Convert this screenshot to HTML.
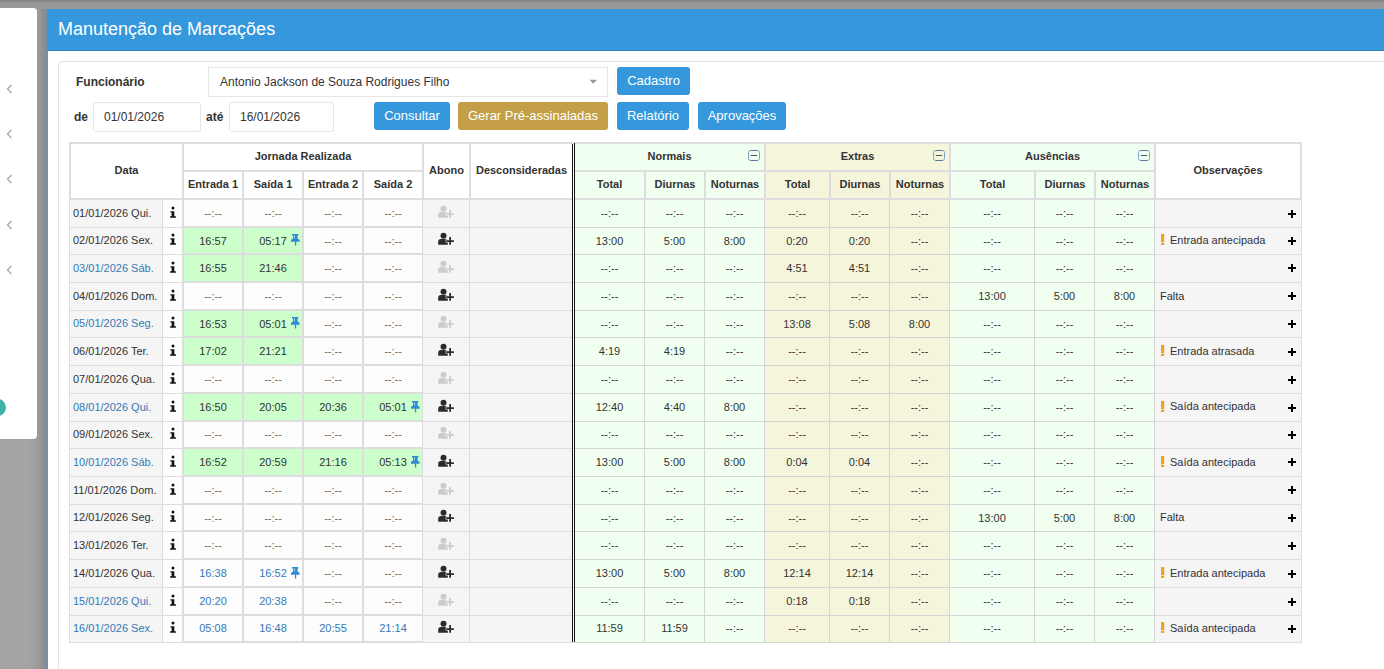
<!DOCTYPE html><html><head><meta charset="utf-8"><style>
html,body{margin:0;padding:0;}
body{width:1384px;height:669px;overflow:hidden;position:relative;background:#a4a4a4;font-family:"Liberation Sans",sans-serif;}
.r{position:absolute;display:block;}
.t{position:absolute;white-space:nowrap;box-sizing:border-box;font-family:"Liberation Sans",sans-serif;}
</style></head><body>
<div class="r" style="left:0px;top:0px;width:1384px;height:2px;background:#868686;"></div>
<div class="r" style="left:0px;top:2px;width:1384px;height:7px;background:#989898;"></div>
<div class="r" style="left:28px;top:9px;width:18px;height:660px;background:linear-gradient(to right,rgba(0,0,0,0) 0%,rgba(0,0,0,0.045) 50%,rgba(0,0,0,0.16) 100%);"></div>
<div class="r" style="left:0px;top:8px;width:37px;height:431px;background:#fff;border-radius:0 4px 4px 0;overflow:hidden;"><div class="r" style="left:-11px;top:391px;width:17px;height:17px;border-radius:50%;background:#3bb4a6;"></div></div>
<svg class="r" style="left:6px;top:84px" width="8" height="10" viewBox="0 0 8 10"><path d="M5.5 1 L1.5 5 L5.5 9" fill="none" stroke="#a3abb8" stroke-width="1.4"/></svg>
<svg class="r" style="left:6px;top:129px" width="8" height="10" viewBox="0 0 8 10"><path d="M5.5 1 L1.5 5 L5.5 9" fill="none" stroke="#a3abb8" stroke-width="1.4"/></svg>
<svg class="r" style="left:6px;top:174px" width="8" height="10" viewBox="0 0 8 10"><path d="M5.5 1 L1.5 5 L5.5 9" fill="none" stroke="#a3abb8" stroke-width="1.4"/></svg>
<svg class="r" style="left:6px;top:220px" width="8" height="10" viewBox="0 0 8 10"><path d="M5.5 1 L1.5 5 L5.5 9" fill="none" stroke="#a3abb8" stroke-width="1.4"/></svg>
<svg class="r" style="left:6px;top:265px" width="8" height="10" viewBox="0 0 8 10"><path d="M5.5 1 L1.5 5 L5.5 9" fill="none" stroke="#a3abb8" stroke-width="1.4"/></svg>
<div class="r" style="left:46px;top:9px;width:2px;height:660px;background:#7191ae;"></div>
<div class="r" style="left:48px;top:51px;width:1336px;height:618px;background:#ffffff;"></div>
<div class="r" style="left:47px;top:9px;width:1337px;height:42px;background:#3598dc;"></div>
<div class="r" style="left:47px;top:50px;width:1337px;height:1px;background:#3081bf;"></div>
<div class="t" style="left:58px;top:8px;width:543px;height:42px;line-height:42px;text-align:left;color:#ffffff;font-size:18px;padding-left:0px;line-height:42px;">Manutenção de Marcações</div>
<div class="r" style="left:58px;top:61px;width:1400px;height:700px;border:1px solid #e3e3e3;border-radius:4px;box-sizing:border-box;"></div>
<div class="t" style="left:76px;top:67px;width:125px;height:30px;line-height:30px;text-align:left;color:#333333;font-size:12px;font-weight:bold;padding-left:0px;">Funcionário</div>
<div class="r" style="left:208px;top:67px;width:400px;height:30px;border:1px solid #e5e5e5;box-sizing:border-box;background:#fff;"></div>
<div class="t" style="left:220px;top:67px;width:381px;height:30px;line-height:30px;text-align:left;color:#333333;font-size:12px;padding-left:0px;">Antonio Jackson de Souza Rodrigues Filho</div>
<svg class="r" style="left:589px;top:79px" width="9" height="6" viewBox="0 0 9 6"><path d="M0.5 0.8 H8 L4.25 4.8 Z" fill="#999"/></svg>
<div class="t" style="left:617px;top:67px;width:73px;height:28px;line-height:28px;background:#3598dc;border-radius:3px;color:#fff;font-size:13px;text-align:center;">Cadastro</div>
<div class="t" style="left:74px;top:102px;width:19px;height:30px;line-height:30px;text-align:left;color:#333333;font-size:12px;font-weight:bold;padding-left:0px;">de</div>
<div class="r" style="left:93px;top:102px;width:108px;height:30px;border:1px solid #e5e5e5;border-radius:3px;box-sizing:border-box;background:#fff;"></div>
<div class="t" style="left:104px;top:102px;width:97px;height:30px;line-height:30px;text-align:left;color:#333333;font-size:12px;padding-left:0px;">01/01/2026</div>
<div class="t" style="left:206px;top:102px;width:23px;height:30px;line-height:30px;text-align:left;color:#333333;font-size:12px;font-weight:bold;padding-left:0px;">até</div>
<div class="r" style="left:229px;top:102px;width:105px;height:30px;border:1px solid #e5e5e5;border-radius:3px;box-sizing:border-box;background:#fff;"></div>
<div class="t" style="left:240px;top:102px;width:94px;height:30px;line-height:30px;text-align:left;color:#333333;font-size:12px;padding-left:0px;">16/01/2026</div>
<div class="t" style="left:374px;top:102px;width:76px;height:28px;line-height:28px;background:#3598dc;border-radius:3px;color:#fff;font-size:13px;text-align:center;">Consultar</div>
<div class="t" style="left:458px;top:102px;width:150px;height:28px;line-height:28px;background:#c49f47;border-radius:3px;color:#fff;font-size:13px;text-align:center;">Gerar Pré-assinaladas</div>
<div class="t" style="left:617px;top:102px;width:72px;height:28px;line-height:28px;background:#3598dc;border-radius:3px;color:#fff;font-size:13px;text-align:center;">Relatório</div>
<div class="t" style="left:698px;top:102px;width:88px;height:28px;line-height:28px;background:#3598dc;border-radius:3px;color:#fff;font-size:13px;text-align:center;">Aprovações</div>
<div class="r" style="left:69px;top:142px;width:1233px;height:501px;background:#dddddd;"></div>
<div class="r" style="left:71px;top:144px;width:111px;height:54px;background:#ffffff;"></div>
<div class="r" style="left:184px;top:144px;width:238px;height:26px;background:#ffffff;"></div>
<div class="r" style="left:184px;top:172px;width:58px;height:26px;background:#ffffff;"></div>
<div class="r" style="left:244px;top:172px;width:58px;height:26px;background:#ffffff;"></div>
<div class="r" style="left:304px;top:172px;width:58px;height:26px;background:#ffffff;"></div>
<div class="r" style="left:364px;top:172px;width:58px;height:26px;background:#ffffff;"></div>
<div class="r" style="left:424px;top:144px;width:45px;height:54px;background:#ffffff;"></div>
<div class="r" style="left:471px;top:144px;width:101px;height:54px;background:#ffffff;"></div>
<div class="r" style="left:575px;top:144px;width:189px;height:26px;background:#f0fff0;"></div>
<div class="r" style="left:575px;top:172px;width:69px;height:26px;background:#f0fff0;"></div>
<div class="r" style="left:646px;top:172px;width:58px;height:26px;background:#f0fff0;"></div>
<div class="r" style="left:706px;top:172px;width:58px;height:26px;background:#f0fff0;"></div>
<div class="r" style="left:766px;top:144px;width:183px;height:26px;background:#f5f5dc;"></div>
<div class="r" style="left:766px;top:172px;width:63px;height:26px;background:#f5f5dc;"></div>
<div class="r" style="left:831px;top:172px;width:58px;height:26px;background:#f5f5dc;"></div>
<div class="r" style="left:891px;top:172px;width:58px;height:26px;background:#f5f5dc;"></div>
<div class="r" style="left:951px;top:144px;width:203px;height:26px;background:#f0fff0;"></div>
<div class="r" style="left:951px;top:172px;width:83px;height:26px;background:#f0fff0;"></div>
<div class="r" style="left:1036px;top:172px;width:58px;height:26px;background:#f0fff0;"></div>
<div class="r" style="left:1096px;top:172px;width:58px;height:26px;background:#f0fff0;"></div>
<div class="r" style="left:1156px;top:144px;width:144px;height:54px;background:#ffffff;"></div>
<div class="t" style="left:71px;top:143px;width:111px;height:54px;line-height:54px;text-align:center;color:#333333;font-size:11px;font-weight:bold;padding-left:0px;">Data</div>
<div class="t" style="left:184px;top:143px;width:238px;height:26px;line-height:26px;text-align:center;color:#333333;font-size:11px;font-weight:bold;padding-left:0px;">Jornada Realizada</div>
<div class="t" style="left:184px;top:171px;width:58px;height:26px;line-height:26px;text-align:center;color:#333333;font-size:11px;font-weight:bold;padding-left:0px;">Entrada 1</div>
<div class="t" style="left:244px;top:171px;width:58px;height:26px;line-height:26px;text-align:center;color:#333333;font-size:11px;font-weight:bold;padding-left:0px;">Saída 1</div>
<div class="t" style="left:304px;top:171px;width:58px;height:26px;line-height:26px;text-align:center;color:#333333;font-size:11px;font-weight:bold;padding-left:0px;">Entrada 2</div>
<div class="t" style="left:364px;top:171px;width:58px;height:26px;line-height:26px;text-align:center;color:#333333;font-size:11px;font-weight:bold;padding-left:0px;">Saída 2</div>
<div class="t" style="left:424px;top:143px;width:45px;height:54px;line-height:54px;text-align:center;color:#333333;font-size:11px;font-weight:bold;padding-left:0px;">Abono</div>
<div class="t" style="left:471px;top:143px;width:101px;height:54px;line-height:54px;text-align:center;color:#333333;font-size:11px;font-weight:bold;padding-left:0px;">Desconsideradas</div>
<div class="t" style="left:575px;top:143px;width:189px;height:26px;line-height:26px;text-align:center;color:#333333;font-size:11px;font-weight:bold;padding-left:0px;">Normais</div>
<div class="t" style="left:575px;top:171px;width:69px;height:26px;line-height:26px;text-align:center;color:#333333;font-size:11px;font-weight:bold;padding-left:0px;">Total</div>
<div class="t" style="left:646px;top:171px;width:58px;height:26px;line-height:26px;text-align:center;color:#333333;font-size:11px;font-weight:bold;padding-left:0px;">Diurnas</div>
<div class="t" style="left:706px;top:171px;width:58px;height:26px;line-height:26px;text-align:center;color:#333333;font-size:11px;font-weight:bold;padding-left:0px;">Noturnas</div>
<div class="t" style="left:766px;top:143px;width:183px;height:26px;line-height:26px;text-align:center;color:#333333;font-size:11px;font-weight:bold;padding-left:0px;">Extras</div>
<div class="t" style="left:766px;top:171px;width:63px;height:26px;line-height:26px;text-align:center;color:#333333;font-size:11px;font-weight:bold;padding-left:0px;">Total</div>
<div class="t" style="left:831px;top:171px;width:58px;height:26px;line-height:26px;text-align:center;color:#333333;font-size:11px;font-weight:bold;padding-left:0px;">Diurnas</div>
<div class="t" style="left:891px;top:171px;width:58px;height:26px;line-height:26px;text-align:center;color:#333333;font-size:11px;font-weight:bold;padding-left:0px;">Noturnas</div>
<div class="t" style="left:951px;top:143px;width:203px;height:26px;line-height:26px;text-align:center;color:#333333;font-size:11px;font-weight:bold;padding-left:0px;">Ausências</div>
<div class="t" style="left:951px;top:171px;width:83px;height:26px;line-height:26px;text-align:center;color:#333333;font-size:11px;font-weight:bold;padding-left:0px;">Total</div>
<div class="t" style="left:1036px;top:171px;width:58px;height:26px;line-height:26px;text-align:center;color:#333333;font-size:11px;font-weight:bold;padding-left:0px;">Diurnas</div>
<div class="t" style="left:1096px;top:171px;width:58px;height:26px;line-height:26px;text-align:center;color:#333333;font-size:11px;font-weight:bold;padding-left:0px;">Noturnas</div>
<div class="t" style="left:1156px;top:143px;width:144px;height:54px;line-height:54px;text-align:center;color:#333333;font-size:11px;font-weight:bold;padding-left:0px;">Observações</div>
<svg class="r" style="left:748px;top:150px" width="12" height="11" viewBox="0 0 12 11"><rect x="0.5" y="0.5" width="11" height="10" rx="2.2" ry="2.2" fill="none" stroke="#84a0cc" stroke-width="1"/><path d="M2.6 0.5 H9.4 M2.6 10.5 H9.4" stroke="#5f7896" stroke-width="1"/><rect x="2.8" y="5" width="6.4" height="1" fill="#3d5a6a"/></svg>
<svg class="r" style="left:933px;top:150px" width="12" height="11" viewBox="0 0 12 11"><rect x="0.5" y="0.5" width="11" height="10" rx="2.2" ry="2.2" fill="none" stroke="#84a0cc" stroke-width="1"/><path d="M2.6 0.5 H9.4 M2.6 10.5 H9.4" stroke="#5f7896" stroke-width="1"/><rect x="2.8" y="5" width="6.4" height="1" fill="#3d5a6a"/></svg>
<svg class="r" style="left:1138px;top:150px" width="12" height="11" viewBox="0 0 12 11"><rect x="0.5" y="0.5" width="11" height="10" rx="2.2" ry="2.2" fill="none" stroke="#84a0cc" stroke-width="1"/><path d="M2.6 0.5 H9.4 M2.6 10.5 H9.4" stroke="#5f7896" stroke-width="1"/><rect x="2.8" y="5" width="6.4" height="1" fill="#3d5a6a"/></svg>
<div class="r" style="left:575px;top:200px;width:580px;height:443px;background:#d2d6d2;"></div>
<div class="r" style="left:70px;top:200px;width:92px;height:27px;background:#f5f5f5;"></div>
<div class="t" style="left:70px;top:200px;width:92px;height:27px;line-height:27px;text-align:left;color:#333333;font-size:11px;padding-left:3px;">01/01/2026 Qui.</div>
<div class="r" style="left:163px;top:200px;width:19px;height:27px;background:#fdfdfd;"></div>
<svg class="r" style="left:169px;top:206px" width="8" height="13" viewBox="0 0 8 13"><circle cx="4" cy="2.1" r="1.5" fill="#111"/><path d="M1.4 5.2 H5.3 V10.3 H6.9 V11.7 H1.1 V10.3 H2.6 V6.5 H1.4 Z" fill="#111"/></svg>
<div class="r" style="left:184px;top:200px;width:58px;height:26px;background:#fdfdfd;"></div>
<div class="t" style="left:184px;top:200px;width:58px;height:27px;line-height:27px;text-align:center;color:#666;font-size:11px;padding-left:0px;">--:--</div>
<div class="r" style="left:244px;top:200px;width:58px;height:26px;background:#fdfdfd;"></div>
<div class="t" style="left:244px;top:200px;width:58px;height:27px;line-height:27px;text-align:center;color:#666;font-size:11px;padding-left:0px;">--:--</div>
<div class="r" style="left:304px;top:200px;width:58px;height:26px;background:#fdfdfd;"></div>
<div class="t" style="left:304px;top:200px;width:58px;height:27px;line-height:27px;text-align:center;color:#666;font-size:11px;padding-left:0px;">--:--</div>
<div class="r" style="left:364px;top:200px;width:58px;height:26px;background:#fdfdfd;"></div>
<div class="t" style="left:364px;top:200px;width:58px;height:27px;line-height:27px;text-align:center;color:#666;font-size:11px;padding-left:0px;">--:--</div>
<div class="r" style="left:423px;top:200px;width:46px;height:27px;background:#f5f5f5;"></div>
<svg class="r" style="left:438px;top:205px" width="17" height="14" viewBox="0 0 17 14"><circle cx="5.5" cy="3.75" r="3" fill="#cccccc"/><path d="M0.2 12.7 V9.7 Q0.2 6.9 3 6.9 H7 Q9.8 6.9 9.8 9.7 V12.7 Z" fill="#cccccc"/><path d="M11.2 5.1 H13 V8.2 H15.9 V9.9 H13 V12.7 H11.2 V9.9 H8.3 V8.2 H11.2 Z" fill="#cccccc" stroke="#f5f5f5" stroke-width="1.2" paint-order="stroke"/></svg>
<div class="r" style="left:470px;top:200px;width:102px;height:27px;background:#f5f5f5;"></div>
<div class="r" style="left:575px;top:200px;width:69px;height:27px;background:#f0fff0;"></div>
<div class="t" style="left:575px;top:200px;width:69px;height:27px;line-height:27px;text-align:center;color:#333333;font-size:11px;padding-left:0px;">--:--</div>
<div class="r" style="left:645px;top:200px;width:59px;height:27px;background:#f0fff0;"></div>
<div class="t" style="left:645px;top:200px;width:59px;height:27px;line-height:27px;text-align:center;color:#333333;font-size:11px;padding-left:0px;">--:--</div>
<div class="r" style="left:705px;top:200px;width:59px;height:27px;background:#f0fff0;"></div>
<div class="t" style="left:705px;top:200px;width:59px;height:27px;line-height:27px;text-align:center;color:#333333;font-size:11px;padding-left:0px;">--:--</div>
<div class="r" style="left:765px;top:200px;width:64px;height:27px;background:#f5f5dc;"></div>
<div class="t" style="left:765px;top:200px;width:64px;height:27px;line-height:27px;text-align:center;color:#333333;font-size:11px;padding-left:0px;">--:--</div>
<div class="r" style="left:830px;top:200px;width:59px;height:27px;background:#f5f5dc;"></div>
<div class="t" style="left:830px;top:200px;width:59px;height:27px;line-height:27px;text-align:center;color:#333333;font-size:11px;padding-left:0px;">--:--</div>
<div class="r" style="left:890px;top:200px;width:59px;height:27px;background:#f5f5dc;"></div>
<div class="t" style="left:890px;top:200px;width:59px;height:27px;line-height:27px;text-align:center;color:#333333;font-size:11px;padding-left:0px;">--:--</div>
<div class="r" style="left:950px;top:200px;width:84px;height:27px;background:#f0fff0;"></div>
<div class="t" style="left:950px;top:200px;width:84px;height:27px;line-height:27px;text-align:center;color:#333333;font-size:11px;padding-left:0px;">--:--</div>
<div class="r" style="left:1035px;top:200px;width:59px;height:27px;background:#f0fff0;"></div>
<div class="t" style="left:1035px;top:200px;width:59px;height:27px;line-height:27px;text-align:center;color:#333333;font-size:11px;padding-left:0px;">--:--</div>
<div class="r" style="left:1095px;top:200px;width:59px;height:27px;background:#f0fff0;"></div>
<div class="t" style="left:1095px;top:200px;width:59px;height:27px;line-height:27px;text-align:center;color:#333333;font-size:11px;padding-left:0px;">--:--</div>
<div class="r" style="left:1155px;top:200px;width:146px;height:27px;background:#f5f5f5;"></div>
<svg class="r" style="left:1288px;top:210px" width="8" height="8" viewBox="0 0 8 8"><rect x="0" y="3" width="8" height="2" fill="#000"/><rect x="3" y="0" width="2" height="8" fill="#000"/></svg>
<div class="r" style="left:70px;top:228px;width:92px;height:26px;background:#f5f5f5;"></div>
<div class="t" style="left:70px;top:227px;width:92px;height:26px;line-height:26px;text-align:left;color:#333333;font-size:11px;padding-left:3px;">02/01/2026 Sex.</div>
<div class="r" style="left:163px;top:228px;width:19px;height:26px;background:#fdfdfd;"></div>
<svg class="r" style="left:169px;top:233px" width="8" height="13" viewBox="0 0 8 13"><circle cx="4" cy="2.1" r="1.5" fill="#111"/><path d="M1.4 5.2 H5.3 V10.3 H6.9 V11.7 H1.1 V10.3 H2.6 V6.5 H1.4 Z" fill="#111"/></svg>
<div class="r" style="left:184px;top:228px;width:58px;height:25px;background:#ccffcc;"></div>
<div class="t" style="left:184px;top:228px;width:58px;height:26px;line-height:26px;text-align:center;color:#333333;font-size:11px;padding-left:0px;">16:57</div>
<div class="r" style="left:244px;top:228px;width:58px;height:25px;background:#ccffcc;"></div>
<div class="t" style="left:244px;top:228px;width:58px;height:26px;line-height:26px;text-align:center;color:#333333;font-size:11px;padding-left:0px;">05:17</div>
<svg class="r" style="left:290px;top:233px" width="11" height="14" viewBox="0 0 11 14"><path d="M2 1 H8.3 V2.1 Q7.3 2.5 7.5 5 Q7.6 6.2 9.6 6.8 V8.7 H1 V6.8 Q3 6.2 3.1 5 Q3.3 2.5 2 2.1 Z" fill="#2e8dd2"/><rect x="4.9" y="8.6" width="1.3" height="3.9" fill="#2e8dd2"/><rect x="4" y="2.3" width="0.9" height="3" fill="#a8d6f2"/></svg>
<div class="r" style="left:304px;top:228px;width:58px;height:25px;background:#fdfdfd;"></div>
<div class="t" style="left:304px;top:228px;width:58px;height:26px;line-height:26px;text-align:center;color:#666;font-size:11px;padding-left:0px;">--:--</div>
<div class="r" style="left:364px;top:228px;width:58px;height:25px;background:#fdfdfd;"></div>
<div class="t" style="left:364px;top:228px;width:58px;height:26px;line-height:26px;text-align:center;color:#666;font-size:11px;padding-left:0px;">--:--</div>
<div class="r" style="left:423px;top:228px;width:46px;height:26px;background:#f5f5f5;"></div>
<svg class="r" style="left:438px;top:232px" width="17" height="14" viewBox="0 0 17 14"><circle cx="5.5" cy="3.75" r="3" fill="#2b2b2b"/><path d="M0.2 12.7 V9.7 Q0.2 6.9 3 6.9 H7 Q9.8 6.9 9.8 9.7 V12.7 Z" fill="#2b2b2b"/><path d="M11.2 5.1 H13 V8.2 H15.9 V9.9 H13 V12.7 H11.2 V9.9 H8.3 V8.2 H11.2 Z" fill="#2b2b2b" stroke="#f5f5f5" stroke-width="1.2" paint-order="stroke"/></svg>
<div class="r" style="left:470px;top:228px;width:102px;height:26px;background:#f5f5f5;"></div>
<div class="r" style="left:575px;top:228px;width:69px;height:26px;background:#f0fff0;"></div>
<div class="t" style="left:575px;top:228px;width:69px;height:26px;line-height:26px;text-align:center;color:#333333;font-size:11px;padding-left:0px;">13:00</div>
<div class="r" style="left:645px;top:228px;width:59px;height:26px;background:#f0fff0;"></div>
<div class="t" style="left:645px;top:228px;width:59px;height:26px;line-height:26px;text-align:center;color:#333333;font-size:11px;padding-left:0px;">5:00</div>
<div class="r" style="left:705px;top:228px;width:59px;height:26px;background:#f0fff0;"></div>
<div class="t" style="left:705px;top:228px;width:59px;height:26px;line-height:26px;text-align:center;color:#333333;font-size:11px;padding-left:0px;">8:00</div>
<div class="r" style="left:765px;top:228px;width:64px;height:26px;background:#f5f5dc;"></div>
<div class="t" style="left:765px;top:228px;width:64px;height:26px;line-height:26px;text-align:center;color:#333333;font-size:11px;padding-left:0px;">0:20</div>
<div class="r" style="left:830px;top:228px;width:59px;height:26px;background:#f5f5dc;"></div>
<div class="t" style="left:830px;top:228px;width:59px;height:26px;line-height:26px;text-align:center;color:#333333;font-size:11px;padding-left:0px;">0:20</div>
<div class="r" style="left:890px;top:228px;width:59px;height:26px;background:#f5f5dc;"></div>
<div class="t" style="left:890px;top:228px;width:59px;height:26px;line-height:26px;text-align:center;color:#333333;font-size:11px;padding-left:0px;">--:--</div>
<div class="r" style="left:950px;top:228px;width:84px;height:26px;background:#f0fff0;"></div>
<div class="t" style="left:950px;top:228px;width:84px;height:26px;line-height:26px;text-align:center;color:#333333;font-size:11px;padding-left:0px;">--:--</div>
<div class="r" style="left:1035px;top:228px;width:59px;height:26px;background:#f0fff0;"></div>
<div class="t" style="left:1035px;top:228px;width:59px;height:26px;line-height:26px;text-align:center;color:#333333;font-size:11px;padding-left:0px;">--:--</div>
<div class="r" style="left:1095px;top:228px;width:59px;height:26px;background:#f0fff0;"></div>
<div class="t" style="left:1095px;top:228px;width:59px;height:26px;line-height:26px;text-align:center;color:#333333;font-size:11px;padding-left:0px;">--:--</div>
<div class="r" style="left:1155px;top:228px;width:146px;height:26px;background:#f5f5f5;"></div>
<svg class="r" style="left:1161px;top:234px" width="4" height="11" viewBox="0 0 4 11"><rect x="0" y="0" width="3.2" height="8" fill="#f3a21c"/><rect x="0" y="8.7" width="3.2" height="2.3" fill="#f3a21c"/></svg>
<div class="t" style="left:1170px;top:227px;width:116px;height:26px;line-height:26px;text-align:left;color:#333333;font-size:11px;padding-left:0px;">Entrada antecipada</div>
<svg class="r" style="left:1288px;top:237px" width="8" height="8" viewBox="0 0 8 8"><rect x="0" y="3" width="8" height="2" fill="#000"/><rect x="3" y="0" width="2" height="8" fill="#000"/></svg>
<div class="r" style="left:70px;top:255px;width:92px;height:27px;background:#f5f5f5;"></div>
<div class="t" style="left:70px;top:255px;width:92px;height:27px;line-height:27px;text-align:left;color:#337ab7;font-size:11px;padding-left:3px;">03/01/2026 Sáb.</div>
<div class="r" style="left:163px;top:255px;width:19px;height:27px;background:#fdfdfd;"></div>
<svg class="r" style="left:169px;top:261px" width="8" height="13" viewBox="0 0 8 13"><circle cx="4" cy="2.1" r="1.5" fill="#111"/><path d="M1.4 5.2 H5.3 V10.3 H6.9 V11.7 H1.1 V10.3 H2.6 V6.5 H1.4 Z" fill="#111"/></svg>
<div class="r" style="left:184px;top:255px;width:58px;height:26px;background:#ccffcc;"></div>
<div class="t" style="left:184px;top:255px;width:58px;height:27px;line-height:27px;text-align:center;color:#333333;font-size:11px;padding-left:0px;">16:55</div>
<div class="r" style="left:244px;top:255px;width:58px;height:26px;background:#ccffcc;"></div>
<div class="t" style="left:244px;top:255px;width:58px;height:27px;line-height:27px;text-align:center;color:#333333;font-size:11px;padding-left:0px;">21:46</div>
<div class="r" style="left:304px;top:255px;width:58px;height:26px;background:#fdfdfd;"></div>
<div class="t" style="left:304px;top:255px;width:58px;height:27px;line-height:27px;text-align:center;color:#666;font-size:11px;padding-left:0px;">--:--</div>
<div class="r" style="left:364px;top:255px;width:58px;height:26px;background:#fdfdfd;"></div>
<div class="t" style="left:364px;top:255px;width:58px;height:27px;line-height:27px;text-align:center;color:#666;font-size:11px;padding-left:0px;">--:--</div>
<div class="r" style="left:423px;top:255px;width:46px;height:27px;background:#f5f5f5;"></div>
<svg class="r" style="left:438px;top:260px" width="17" height="14" viewBox="0 0 17 14"><circle cx="5.5" cy="3.75" r="3" fill="#cccccc"/><path d="M0.2 12.7 V9.7 Q0.2 6.9 3 6.9 H7 Q9.8 6.9 9.8 9.7 V12.7 Z" fill="#cccccc"/><path d="M11.2 5.1 H13 V8.2 H15.9 V9.9 H13 V12.7 H11.2 V9.9 H8.3 V8.2 H11.2 Z" fill="#cccccc" stroke="#f5f5f5" stroke-width="1.2" paint-order="stroke"/></svg>
<div class="r" style="left:470px;top:255px;width:102px;height:27px;background:#f5f5f5;"></div>
<div class="r" style="left:575px;top:255px;width:69px;height:27px;background:#f0fff0;"></div>
<div class="t" style="left:575px;top:255px;width:69px;height:27px;line-height:27px;text-align:center;color:#333333;font-size:11px;padding-left:0px;">--:--</div>
<div class="r" style="left:645px;top:255px;width:59px;height:27px;background:#f0fff0;"></div>
<div class="t" style="left:645px;top:255px;width:59px;height:27px;line-height:27px;text-align:center;color:#333333;font-size:11px;padding-left:0px;">--:--</div>
<div class="r" style="left:705px;top:255px;width:59px;height:27px;background:#f0fff0;"></div>
<div class="t" style="left:705px;top:255px;width:59px;height:27px;line-height:27px;text-align:center;color:#333333;font-size:11px;padding-left:0px;">--:--</div>
<div class="r" style="left:765px;top:255px;width:64px;height:27px;background:#f5f5dc;"></div>
<div class="t" style="left:765px;top:255px;width:64px;height:27px;line-height:27px;text-align:center;color:#333333;font-size:11px;padding-left:0px;">4:51</div>
<div class="r" style="left:830px;top:255px;width:59px;height:27px;background:#f5f5dc;"></div>
<div class="t" style="left:830px;top:255px;width:59px;height:27px;line-height:27px;text-align:center;color:#333333;font-size:11px;padding-left:0px;">4:51</div>
<div class="r" style="left:890px;top:255px;width:59px;height:27px;background:#f5f5dc;"></div>
<div class="t" style="left:890px;top:255px;width:59px;height:27px;line-height:27px;text-align:center;color:#333333;font-size:11px;padding-left:0px;">--:--</div>
<div class="r" style="left:950px;top:255px;width:84px;height:27px;background:#f0fff0;"></div>
<div class="t" style="left:950px;top:255px;width:84px;height:27px;line-height:27px;text-align:center;color:#333333;font-size:11px;padding-left:0px;">--:--</div>
<div class="r" style="left:1035px;top:255px;width:59px;height:27px;background:#f0fff0;"></div>
<div class="t" style="left:1035px;top:255px;width:59px;height:27px;line-height:27px;text-align:center;color:#333333;font-size:11px;padding-left:0px;">--:--</div>
<div class="r" style="left:1095px;top:255px;width:59px;height:27px;background:#f0fff0;"></div>
<div class="t" style="left:1095px;top:255px;width:59px;height:27px;line-height:27px;text-align:center;color:#333333;font-size:11px;padding-left:0px;">--:--</div>
<div class="r" style="left:1155px;top:255px;width:146px;height:27px;background:#f5f5f5;"></div>
<svg class="r" style="left:1288px;top:264px" width="8" height="8" viewBox="0 0 8 8"><rect x="0" y="3" width="8" height="2" fill="#000"/><rect x="3" y="0" width="2" height="8" fill="#000"/></svg>
<div class="r" style="left:70px;top:283px;width:92px;height:27px;background:#f5f5f5;"></div>
<div class="t" style="left:70px;top:283px;width:92px;height:27px;line-height:27px;text-align:left;color:#333333;font-size:11px;padding-left:3px;">04/01/2026 Dom.</div>
<div class="r" style="left:163px;top:283px;width:19px;height:27px;background:#fdfdfd;"></div>
<svg class="r" style="left:169px;top:289px" width="8" height="13" viewBox="0 0 8 13"><circle cx="4" cy="2.1" r="1.5" fill="#111"/><path d="M1.4 5.2 H5.3 V10.3 H6.9 V11.7 H1.1 V10.3 H2.6 V6.5 H1.4 Z" fill="#111"/></svg>
<div class="r" style="left:184px;top:283px;width:58px;height:26px;background:#fdfdfd;"></div>
<div class="t" style="left:184px;top:283px;width:58px;height:27px;line-height:27px;text-align:center;color:#666;font-size:11px;padding-left:0px;">--:--</div>
<div class="r" style="left:244px;top:283px;width:58px;height:26px;background:#fdfdfd;"></div>
<div class="t" style="left:244px;top:283px;width:58px;height:27px;line-height:27px;text-align:center;color:#666;font-size:11px;padding-left:0px;">--:--</div>
<div class="r" style="left:304px;top:283px;width:58px;height:26px;background:#fdfdfd;"></div>
<div class="t" style="left:304px;top:283px;width:58px;height:27px;line-height:27px;text-align:center;color:#666;font-size:11px;padding-left:0px;">--:--</div>
<div class="r" style="left:364px;top:283px;width:58px;height:26px;background:#fdfdfd;"></div>
<div class="t" style="left:364px;top:283px;width:58px;height:27px;line-height:27px;text-align:center;color:#666;font-size:11px;padding-left:0px;">--:--</div>
<div class="r" style="left:423px;top:283px;width:46px;height:27px;background:#f5f5f5;"></div>
<svg class="r" style="left:438px;top:288px" width="17" height="14" viewBox="0 0 17 14"><circle cx="5.5" cy="3.75" r="3" fill="#2b2b2b"/><path d="M0.2 12.7 V9.7 Q0.2 6.9 3 6.9 H7 Q9.8 6.9 9.8 9.7 V12.7 Z" fill="#2b2b2b"/><path d="M11.2 5.1 H13 V8.2 H15.9 V9.9 H13 V12.7 H11.2 V9.9 H8.3 V8.2 H11.2 Z" fill="#2b2b2b" stroke="#f5f5f5" stroke-width="1.2" paint-order="stroke"/></svg>
<div class="r" style="left:470px;top:283px;width:102px;height:27px;background:#f5f5f5;"></div>
<div class="r" style="left:575px;top:283px;width:69px;height:27px;background:#f0fff0;"></div>
<div class="t" style="left:575px;top:283px;width:69px;height:27px;line-height:27px;text-align:center;color:#333333;font-size:11px;padding-left:0px;">--:--</div>
<div class="r" style="left:645px;top:283px;width:59px;height:27px;background:#f0fff0;"></div>
<div class="t" style="left:645px;top:283px;width:59px;height:27px;line-height:27px;text-align:center;color:#333333;font-size:11px;padding-left:0px;">--:--</div>
<div class="r" style="left:705px;top:283px;width:59px;height:27px;background:#f0fff0;"></div>
<div class="t" style="left:705px;top:283px;width:59px;height:27px;line-height:27px;text-align:center;color:#333333;font-size:11px;padding-left:0px;">--:--</div>
<div class="r" style="left:765px;top:283px;width:64px;height:27px;background:#f5f5dc;"></div>
<div class="t" style="left:765px;top:283px;width:64px;height:27px;line-height:27px;text-align:center;color:#333333;font-size:11px;padding-left:0px;">--:--</div>
<div class="r" style="left:830px;top:283px;width:59px;height:27px;background:#f5f5dc;"></div>
<div class="t" style="left:830px;top:283px;width:59px;height:27px;line-height:27px;text-align:center;color:#333333;font-size:11px;padding-left:0px;">--:--</div>
<div class="r" style="left:890px;top:283px;width:59px;height:27px;background:#f5f5dc;"></div>
<div class="t" style="left:890px;top:283px;width:59px;height:27px;line-height:27px;text-align:center;color:#333333;font-size:11px;padding-left:0px;">--:--</div>
<div class="r" style="left:950px;top:283px;width:84px;height:27px;background:#f0fff0;"></div>
<div class="t" style="left:950px;top:283px;width:84px;height:27px;line-height:27px;text-align:center;color:#333333;font-size:11px;padding-left:0px;">13:00</div>
<div class="r" style="left:1035px;top:283px;width:59px;height:27px;background:#f0fff0;"></div>
<div class="t" style="left:1035px;top:283px;width:59px;height:27px;line-height:27px;text-align:center;color:#333333;font-size:11px;padding-left:0px;">5:00</div>
<div class="r" style="left:1095px;top:283px;width:59px;height:27px;background:#f0fff0;"></div>
<div class="t" style="left:1095px;top:283px;width:59px;height:27px;line-height:27px;text-align:center;color:#333333;font-size:11px;padding-left:0px;">8:00</div>
<div class="r" style="left:1155px;top:283px;width:146px;height:27px;background:#f5f5f5;"></div>
<div class="t" style="left:1160px;top:283px;width:126px;height:27px;line-height:27px;text-align:left;color:#333333;font-size:11px;padding-left:0px;">Falta</div>
<svg class="r" style="left:1288px;top:292px" width="8" height="8" viewBox="0 0 8 8"><rect x="0" y="3" width="8" height="2" fill="#000"/><rect x="3" y="0" width="2" height="8" fill="#000"/></svg>
<div class="r" style="left:70px;top:311px;width:92px;height:26px;background:#f5f5f5;"></div>
<div class="t" style="left:70px;top:310px;width:92px;height:26px;line-height:26px;text-align:left;color:#337ab7;font-size:11px;padding-left:3px;">05/01/2026 Seg.</div>
<div class="r" style="left:163px;top:311px;width:19px;height:26px;background:#fdfdfd;"></div>
<svg class="r" style="left:169px;top:316px" width="8" height="13" viewBox="0 0 8 13"><circle cx="4" cy="2.1" r="1.5" fill="#111"/><path d="M1.4 5.2 H5.3 V10.3 H6.9 V11.7 H1.1 V10.3 H2.6 V6.5 H1.4 Z" fill="#111"/></svg>
<div class="r" style="left:184px;top:311px;width:58px;height:25px;background:#ccffcc;"></div>
<div class="t" style="left:184px;top:311px;width:58px;height:26px;line-height:26px;text-align:center;color:#333333;font-size:11px;padding-left:0px;">16:53</div>
<div class="r" style="left:244px;top:311px;width:58px;height:25px;background:#ccffcc;"></div>
<div class="t" style="left:244px;top:311px;width:58px;height:26px;line-height:26px;text-align:center;color:#333333;font-size:11px;padding-left:0px;">05:01</div>
<svg class="r" style="left:290px;top:316px" width="11" height="14" viewBox="0 0 11 14"><path d="M2 1 H8.3 V2.1 Q7.3 2.5 7.5 5 Q7.6 6.2 9.6 6.8 V8.7 H1 V6.8 Q3 6.2 3.1 5 Q3.3 2.5 2 2.1 Z" fill="#2e8dd2"/><rect x="4.9" y="8.6" width="1.3" height="3.9" fill="#2e8dd2"/><rect x="4" y="2.3" width="0.9" height="3" fill="#a8d6f2"/></svg>
<div class="r" style="left:304px;top:311px;width:58px;height:25px;background:#fdfdfd;"></div>
<div class="t" style="left:304px;top:311px;width:58px;height:26px;line-height:26px;text-align:center;color:#666;font-size:11px;padding-left:0px;">--:--</div>
<div class="r" style="left:364px;top:311px;width:58px;height:25px;background:#fdfdfd;"></div>
<div class="t" style="left:364px;top:311px;width:58px;height:26px;line-height:26px;text-align:center;color:#666;font-size:11px;padding-left:0px;">--:--</div>
<div class="r" style="left:423px;top:311px;width:46px;height:26px;background:#f5f5f5;"></div>
<svg class="r" style="left:438px;top:315px" width="17" height="14" viewBox="0 0 17 14"><circle cx="5.5" cy="3.75" r="3" fill="#cccccc"/><path d="M0.2 12.7 V9.7 Q0.2 6.9 3 6.9 H7 Q9.8 6.9 9.8 9.7 V12.7 Z" fill="#cccccc"/><path d="M11.2 5.1 H13 V8.2 H15.9 V9.9 H13 V12.7 H11.2 V9.9 H8.3 V8.2 H11.2 Z" fill="#cccccc" stroke="#f5f5f5" stroke-width="1.2" paint-order="stroke"/></svg>
<div class="r" style="left:470px;top:311px;width:102px;height:26px;background:#f5f5f5;"></div>
<div class="r" style="left:575px;top:311px;width:69px;height:26px;background:#f0fff0;"></div>
<div class="t" style="left:575px;top:311px;width:69px;height:26px;line-height:26px;text-align:center;color:#333333;font-size:11px;padding-left:0px;">--:--</div>
<div class="r" style="left:645px;top:311px;width:59px;height:26px;background:#f0fff0;"></div>
<div class="t" style="left:645px;top:311px;width:59px;height:26px;line-height:26px;text-align:center;color:#333333;font-size:11px;padding-left:0px;">--:--</div>
<div class="r" style="left:705px;top:311px;width:59px;height:26px;background:#f0fff0;"></div>
<div class="t" style="left:705px;top:311px;width:59px;height:26px;line-height:26px;text-align:center;color:#333333;font-size:11px;padding-left:0px;">--:--</div>
<div class="r" style="left:765px;top:311px;width:64px;height:26px;background:#f5f5dc;"></div>
<div class="t" style="left:765px;top:311px;width:64px;height:26px;line-height:26px;text-align:center;color:#333333;font-size:11px;padding-left:0px;">13:08</div>
<div class="r" style="left:830px;top:311px;width:59px;height:26px;background:#f5f5dc;"></div>
<div class="t" style="left:830px;top:311px;width:59px;height:26px;line-height:26px;text-align:center;color:#333333;font-size:11px;padding-left:0px;">5:08</div>
<div class="r" style="left:890px;top:311px;width:59px;height:26px;background:#f5f5dc;"></div>
<div class="t" style="left:890px;top:311px;width:59px;height:26px;line-height:26px;text-align:center;color:#333333;font-size:11px;padding-left:0px;">8:00</div>
<div class="r" style="left:950px;top:311px;width:84px;height:26px;background:#f0fff0;"></div>
<div class="t" style="left:950px;top:311px;width:84px;height:26px;line-height:26px;text-align:center;color:#333333;font-size:11px;padding-left:0px;">--:--</div>
<div class="r" style="left:1035px;top:311px;width:59px;height:26px;background:#f0fff0;"></div>
<div class="t" style="left:1035px;top:311px;width:59px;height:26px;line-height:26px;text-align:center;color:#333333;font-size:11px;padding-left:0px;">--:--</div>
<div class="r" style="left:1095px;top:311px;width:59px;height:26px;background:#f0fff0;"></div>
<div class="t" style="left:1095px;top:311px;width:59px;height:26px;line-height:26px;text-align:center;color:#333333;font-size:11px;padding-left:0px;">--:--</div>
<div class="r" style="left:1155px;top:311px;width:146px;height:26px;background:#f5f5f5;"></div>
<svg class="r" style="left:1288px;top:320px" width="8" height="8" viewBox="0 0 8 8"><rect x="0" y="3" width="8" height="2" fill="#000"/><rect x="3" y="0" width="2" height="8" fill="#000"/></svg>
<div class="r" style="left:70px;top:338px;width:92px;height:27px;background:#f5f5f5;"></div>
<div class="t" style="left:70px;top:338px;width:92px;height:27px;line-height:27px;text-align:left;color:#333333;font-size:11px;padding-left:3px;">06/01/2026 Ter.</div>
<div class="r" style="left:163px;top:338px;width:19px;height:27px;background:#fdfdfd;"></div>
<svg class="r" style="left:169px;top:344px" width="8" height="13" viewBox="0 0 8 13"><circle cx="4" cy="2.1" r="1.5" fill="#111"/><path d="M1.4 5.2 H5.3 V10.3 H6.9 V11.7 H1.1 V10.3 H2.6 V6.5 H1.4 Z" fill="#111"/></svg>
<div class="r" style="left:184px;top:338px;width:58px;height:26px;background:#ccffcc;"></div>
<div class="t" style="left:184px;top:338px;width:58px;height:27px;line-height:27px;text-align:center;color:#333333;font-size:11px;padding-left:0px;">17:02</div>
<div class="r" style="left:244px;top:338px;width:58px;height:26px;background:#ccffcc;"></div>
<div class="t" style="left:244px;top:338px;width:58px;height:27px;line-height:27px;text-align:center;color:#333333;font-size:11px;padding-left:0px;">21:21</div>
<div class="r" style="left:304px;top:338px;width:58px;height:26px;background:#fdfdfd;"></div>
<div class="t" style="left:304px;top:338px;width:58px;height:27px;line-height:27px;text-align:center;color:#666;font-size:11px;padding-left:0px;">--:--</div>
<div class="r" style="left:364px;top:338px;width:58px;height:26px;background:#fdfdfd;"></div>
<div class="t" style="left:364px;top:338px;width:58px;height:27px;line-height:27px;text-align:center;color:#666;font-size:11px;padding-left:0px;">--:--</div>
<div class="r" style="left:423px;top:338px;width:46px;height:27px;background:#f5f5f5;"></div>
<svg class="r" style="left:438px;top:343px" width="17" height="14" viewBox="0 0 17 14"><circle cx="5.5" cy="3.75" r="3" fill="#2b2b2b"/><path d="M0.2 12.7 V9.7 Q0.2 6.9 3 6.9 H7 Q9.8 6.9 9.8 9.7 V12.7 Z" fill="#2b2b2b"/><path d="M11.2 5.1 H13 V8.2 H15.9 V9.9 H13 V12.7 H11.2 V9.9 H8.3 V8.2 H11.2 Z" fill="#2b2b2b" stroke="#f5f5f5" stroke-width="1.2" paint-order="stroke"/></svg>
<div class="r" style="left:470px;top:338px;width:102px;height:27px;background:#f5f5f5;"></div>
<div class="r" style="left:575px;top:338px;width:69px;height:27px;background:#f0fff0;"></div>
<div class="t" style="left:575px;top:338px;width:69px;height:27px;line-height:27px;text-align:center;color:#333333;font-size:11px;padding-left:0px;">4:19</div>
<div class="r" style="left:645px;top:338px;width:59px;height:27px;background:#f0fff0;"></div>
<div class="t" style="left:645px;top:338px;width:59px;height:27px;line-height:27px;text-align:center;color:#333333;font-size:11px;padding-left:0px;">4:19</div>
<div class="r" style="left:705px;top:338px;width:59px;height:27px;background:#f0fff0;"></div>
<div class="t" style="left:705px;top:338px;width:59px;height:27px;line-height:27px;text-align:center;color:#333333;font-size:11px;padding-left:0px;">--:--</div>
<div class="r" style="left:765px;top:338px;width:64px;height:27px;background:#f5f5dc;"></div>
<div class="t" style="left:765px;top:338px;width:64px;height:27px;line-height:27px;text-align:center;color:#333333;font-size:11px;padding-left:0px;">--:--</div>
<div class="r" style="left:830px;top:338px;width:59px;height:27px;background:#f5f5dc;"></div>
<div class="t" style="left:830px;top:338px;width:59px;height:27px;line-height:27px;text-align:center;color:#333333;font-size:11px;padding-left:0px;">--:--</div>
<div class="r" style="left:890px;top:338px;width:59px;height:27px;background:#f5f5dc;"></div>
<div class="t" style="left:890px;top:338px;width:59px;height:27px;line-height:27px;text-align:center;color:#333333;font-size:11px;padding-left:0px;">--:--</div>
<div class="r" style="left:950px;top:338px;width:84px;height:27px;background:#f0fff0;"></div>
<div class="t" style="left:950px;top:338px;width:84px;height:27px;line-height:27px;text-align:center;color:#333333;font-size:11px;padding-left:0px;">--:--</div>
<div class="r" style="left:1035px;top:338px;width:59px;height:27px;background:#f0fff0;"></div>
<div class="t" style="left:1035px;top:338px;width:59px;height:27px;line-height:27px;text-align:center;color:#333333;font-size:11px;padding-left:0px;">--:--</div>
<div class="r" style="left:1095px;top:338px;width:59px;height:27px;background:#f0fff0;"></div>
<div class="t" style="left:1095px;top:338px;width:59px;height:27px;line-height:27px;text-align:center;color:#333333;font-size:11px;padding-left:0px;">--:--</div>
<div class="r" style="left:1155px;top:338px;width:146px;height:27px;background:#f5f5f5;"></div>
<svg class="r" style="left:1161px;top:345px" width="4" height="11" viewBox="0 0 4 11"><rect x="0" y="0" width="3.2" height="8" fill="#f3a21c"/><rect x="0" y="8.7" width="3.2" height="2.3" fill="#f3a21c"/></svg>
<div class="t" style="left:1170px;top:338px;width:116px;height:27px;line-height:27px;text-align:left;color:#333333;font-size:11px;padding-left:0px;">Entrada atrasada</div>
<svg class="r" style="left:1288px;top:348px" width="8" height="8" viewBox="0 0 8 8"><rect x="0" y="3" width="8" height="2" fill="#000"/><rect x="3" y="0" width="2" height="8" fill="#000"/></svg>
<div class="r" style="left:70px;top:366px;width:92px;height:27px;background:#f5f5f5;"></div>
<div class="t" style="left:70px;top:366px;width:92px;height:27px;line-height:27px;text-align:left;color:#333333;font-size:11px;padding-left:3px;">07/01/2026 Qua.</div>
<div class="r" style="left:163px;top:366px;width:19px;height:27px;background:#fdfdfd;"></div>
<svg class="r" style="left:169px;top:372px" width="8" height="13" viewBox="0 0 8 13"><circle cx="4" cy="2.1" r="1.5" fill="#111"/><path d="M1.4 5.2 H5.3 V10.3 H6.9 V11.7 H1.1 V10.3 H2.6 V6.5 H1.4 Z" fill="#111"/></svg>
<div class="r" style="left:184px;top:366px;width:58px;height:26px;background:#fdfdfd;"></div>
<div class="t" style="left:184px;top:366px;width:58px;height:27px;line-height:27px;text-align:center;color:#666;font-size:11px;padding-left:0px;">--:--</div>
<div class="r" style="left:244px;top:366px;width:58px;height:26px;background:#fdfdfd;"></div>
<div class="t" style="left:244px;top:366px;width:58px;height:27px;line-height:27px;text-align:center;color:#666;font-size:11px;padding-left:0px;">--:--</div>
<div class="r" style="left:304px;top:366px;width:58px;height:26px;background:#fdfdfd;"></div>
<div class="t" style="left:304px;top:366px;width:58px;height:27px;line-height:27px;text-align:center;color:#666;font-size:11px;padding-left:0px;">--:--</div>
<div class="r" style="left:364px;top:366px;width:58px;height:26px;background:#fdfdfd;"></div>
<div class="t" style="left:364px;top:366px;width:58px;height:27px;line-height:27px;text-align:center;color:#666;font-size:11px;padding-left:0px;">--:--</div>
<div class="r" style="left:423px;top:366px;width:46px;height:27px;background:#f5f5f5;"></div>
<svg class="r" style="left:438px;top:371px" width="17" height="14" viewBox="0 0 17 14"><circle cx="5.5" cy="3.75" r="3" fill="#cccccc"/><path d="M0.2 12.7 V9.7 Q0.2 6.9 3 6.9 H7 Q9.8 6.9 9.8 9.7 V12.7 Z" fill="#cccccc"/><path d="M11.2 5.1 H13 V8.2 H15.9 V9.9 H13 V12.7 H11.2 V9.9 H8.3 V8.2 H11.2 Z" fill="#cccccc" stroke="#f5f5f5" stroke-width="1.2" paint-order="stroke"/></svg>
<div class="r" style="left:470px;top:366px;width:102px;height:27px;background:#f5f5f5;"></div>
<div class="r" style="left:575px;top:366px;width:69px;height:27px;background:#f0fff0;"></div>
<div class="t" style="left:575px;top:366px;width:69px;height:27px;line-height:27px;text-align:center;color:#333333;font-size:11px;padding-left:0px;">--:--</div>
<div class="r" style="left:645px;top:366px;width:59px;height:27px;background:#f0fff0;"></div>
<div class="t" style="left:645px;top:366px;width:59px;height:27px;line-height:27px;text-align:center;color:#333333;font-size:11px;padding-left:0px;">--:--</div>
<div class="r" style="left:705px;top:366px;width:59px;height:27px;background:#f0fff0;"></div>
<div class="t" style="left:705px;top:366px;width:59px;height:27px;line-height:27px;text-align:center;color:#333333;font-size:11px;padding-left:0px;">--:--</div>
<div class="r" style="left:765px;top:366px;width:64px;height:27px;background:#f5f5dc;"></div>
<div class="t" style="left:765px;top:366px;width:64px;height:27px;line-height:27px;text-align:center;color:#333333;font-size:11px;padding-left:0px;">--:--</div>
<div class="r" style="left:830px;top:366px;width:59px;height:27px;background:#f5f5dc;"></div>
<div class="t" style="left:830px;top:366px;width:59px;height:27px;line-height:27px;text-align:center;color:#333333;font-size:11px;padding-left:0px;">--:--</div>
<div class="r" style="left:890px;top:366px;width:59px;height:27px;background:#f5f5dc;"></div>
<div class="t" style="left:890px;top:366px;width:59px;height:27px;line-height:27px;text-align:center;color:#333333;font-size:11px;padding-left:0px;">--:--</div>
<div class="r" style="left:950px;top:366px;width:84px;height:27px;background:#f0fff0;"></div>
<div class="t" style="left:950px;top:366px;width:84px;height:27px;line-height:27px;text-align:center;color:#333333;font-size:11px;padding-left:0px;">--:--</div>
<div class="r" style="left:1035px;top:366px;width:59px;height:27px;background:#f0fff0;"></div>
<div class="t" style="left:1035px;top:366px;width:59px;height:27px;line-height:27px;text-align:center;color:#333333;font-size:11px;padding-left:0px;">--:--</div>
<div class="r" style="left:1095px;top:366px;width:59px;height:27px;background:#f0fff0;"></div>
<div class="t" style="left:1095px;top:366px;width:59px;height:27px;line-height:27px;text-align:center;color:#333333;font-size:11px;padding-left:0px;">--:--</div>
<div class="r" style="left:1155px;top:366px;width:146px;height:27px;background:#f5f5f5;"></div>
<svg class="r" style="left:1288px;top:376px" width="8" height="8" viewBox="0 0 8 8"><rect x="0" y="3" width="8" height="2" fill="#000"/><rect x="3" y="0" width="2" height="8" fill="#000"/></svg>
<div class="r" style="left:70px;top:394px;width:92px;height:27px;background:#f5f5f5;"></div>
<div class="t" style="left:70px;top:394px;width:92px;height:27px;line-height:27px;text-align:left;color:#337ab7;font-size:11px;padding-left:3px;">08/01/2026 Qui.</div>
<div class="r" style="left:163px;top:394px;width:19px;height:27px;background:#fdfdfd;"></div>
<svg class="r" style="left:169px;top:400px" width="8" height="13" viewBox="0 0 8 13"><circle cx="4" cy="2.1" r="1.5" fill="#111"/><path d="M1.4 5.2 H5.3 V10.3 H6.9 V11.7 H1.1 V10.3 H2.6 V6.5 H1.4 Z" fill="#111"/></svg>
<div class="r" style="left:184px;top:394px;width:58px;height:26px;background:#ccffcc;"></div>
<div class="t" style="left:184px;top:394px;width:58px;height:27px;line-height:27px;text-align:center;color:#333333;font-size:11px;padding-left:0px;">16:50</div>
<div class="r" style="left:244px;top:394px;width:58px;height:26px;background:#ccffcc;"></div>
<div class="t" style="left:244px;top:394px;width:58px;height:27px;line-height:27px;text-align:center;color:#333333;font-size:11px;padding-left:0px;">20:05</div>
<div class="r" style="left:304px;top:394px;width:58px;height:26px;background:#ccffcc;"></div>
<div class="t" style="left:304px;top:394px;width:58px;height:27px;line-height:27px;text-align:center;color:#333333;font-size:11px;padding-left:0px;">20:36</div>
<div class="r" style="left:364px;top:394px;width:58px;height:26px;background:#ccffcc;"></div>
<div class="t" style="left:364px;top:394px;width:58px;height:27px;line-height:27px;text-align:center;color:#333333;font-size:11px;padding-left:0px;">05:01</div>
<svg class="r" style="left:410px;top:400px" width="11" height="14" viewBox="0 0 11 14"><path d="M2 1 H8.3 V2.1 Q7.3 2.5 7.5 5 Q7.6 6.2 9.6 6.8 V8.7 H1 V6.8 Q3 6.2 3.1 5 Q3.3 2.5 2 2.1 Z" fill="#2e8dd2"/><rect x="4.9" y="8.6" width="1.3" height="3.9" fill="#2e8dd2"/><rect x="4" y="2.3" width="0.9" height="3" fill="#a8d6f2"/></svg>
<div class="r" style="left:423px;top:394px;width:46px;height:27px;background:#f5f5f5;"></div>
<svg class="r" style="left:438px;top:399px" width="17" height="14" viewBox="0 0 17 14"><circle cx="5.5" cy="3.75" r="3" fill="#2b2b2b"/><path d="M0.2 12.7 V9.7 Q0.2 6.9 3 6.9 H7 Q9.8 6.9 9.8 9.7 V12.7 Z" fill="#2b2b2b"/><path d="M11.2 5.1 H13 V8.2 H15.9 V9.9 H13 V12.7 H11.2 V9.9 H8.3 V8.2 H11.2 Z" fill="#2b2b2b" stroke="#f5f5f5" stroke-width="1.2" paint-order="stroke"/></svg>
<div class="r" style="left:470px;top:394px;width:102px;height:27px;background:#f5f5f5;"></div>
<div class="r" style="left:575px;top:394px;width:69px;height:27px;background:#f0fff0;"></div>
<div class="t" style="left:575px;top:394px;width:69px;height:27px;line-height:27px;text-align:center;color:#333333;font-size:11px;padding-left:0px;">12:40</div>
<div class="r" style="left:645px;top:394px;width:59px;height:27px;background:#f0fff0;"></div>
<div class="t" style="left:645px;top:394px;width:59px;height:27px;line-height:27px;text-align:center;color:#333333;font-size:11px;padding-left:0px;">4:40</div>
<div class="r" style="left:705px;top:394px;width:59px;height:27px;background:#f0fff0;"></div>
<div class="t" style="left:705px;top:394px;width:59px;height:27px;line-height:27px;text-align:center;color:#333333;font-size:11px;padding-left:0px;">8:00</div>
<div class="r" style="left:765px;top:394px;width:64px;height:27px;background:#f5f5dc;"></div>
<div class="t" style="left:765px;top:394px;width:64px;height:27px;line-height:27px;text-align:center;color:#333333;font-size:11px;padding-left:0px;">--:--</div>
<div class="r" style="left:830px;top:394px;width:59px;height:27px;background:#f5f5dc;"></div>
<div class="t" style="left:830px;top:394px;width:59px;height:27px;line-height:27px;text-align:center;color:#333333;font-size:11px;padding-left:0px;">--:--</div>
<div class="r" style="left:890px;top:394px;width:59px;height:27px;background:#f5f5dc;"></div>
<div class="t" style="left:890px;top:394px;width:59px;height:27px;line-height:27px;text-align:center;color:#333333;font-size:11px;padding-left:0px;">--:--</div>
<div class="r" style="left:950px;top:394px;width:84px;height:27px;background:#f0fff0;"></div>
<div class="t" style="left:950px;top:394px;width:84px;height:27px;line-height:27px;text-align:center;color:#333333;font-size:11px;padding-left:0px;">--:--</div>
<div class="r" style="left:1035px;top:394px;width:59px;height:27px;background:#f0fff0;"></div>
<div class="t" style="left:1035px;top:394px;width:59px;height:27px;line-height:27px;text-align:center;color:#333333;font-size:11px;padding-left:0px;">--:--</div>
<div class="r" style="left:1095px;top:394px;width:59px;height:27px;background:#f0fff0;"></div>
<div class="t" style="left:1095px;top:394px;width:59px;height:27px;line-height:27px;text-align:center;color:#333333;font-size:11px;padding-left:0px;">--:--</div>
<div class="r" style="left:1155px;top:394px;width:146px;height:27px;background:#f5f5f5;"></div>
<svg class="r" style="left:1161px;top:401px" width="4" height="11" viewBox="0 0 4 11"><rect x="0" y="0" width="3.2" height="8" fill="#f3a21c"/><rect x="0" y="8.7" width="3.2" height="2.3" fill="#f3a21c"/></svg>
<div class="t" style="left:1170px;top:393px;width:116px;height:27px;line-height:27px;text-align:left;color:#333333;font-size:11px;padding-left:0px;">Saída antecipada</div>
<svg class="r" style="left:1288px;top:404px" width="8" height="8" viewBox="0 0 8 8"><rect x="0" y="3" width="8" height="2" fill="#000"/><rect x="3" y="0" width="2" height="8" fill="#000"/></svg>
<div class="r" style="left:70px;top:422px;width:92px;height:26px;background:#f5f5f5;"></div>
<div class="t" style="left:70px;top:421px;width:92px;height:26px;line-height:26px;text-align:left;color:#333333;font-size:11px;padding-left:3px;">09/01/2026 Sex.</div>
<div class="r" style="left:163px;top:422px;width:19px;height:26px;background:#fdfdfd;"></div>
<svg class="r" style="left:169px;top:427px" width="8" height="13" viewBox="0 0 8 13"><circle cx="4" cy="2.1" r="1.5" fill="#111"/><path d="M1.4 5.2 H5.3 V10.3 H6.9 V11.7 H1.1 V10.3 H2.6 V6.5 H1.4 Z" fill="#111"/></svg>
<div class="r" style="left:184px;top:422px;width:58px;height:25px;background:#fdfdfd;"></div>
<div class="t" style="left:184px;top:421px;width:58px;height:26px;line-height:26px;text-align:center;color:#666;font-size:11px;padding-left:0px;">--:--</div>
<div class="r" style="left:244px;top:422px;width:58px;height:25px;background:#fdfdfd;"></div>
<div class="t" style="left:244px;top:421px;width:58px;height:26px;line-height:26px;text-align:center;color:#666;font-size:11px;padding-left:0px;">--:--</div>
<div class="r" style="left:304px;top:422px;width:58px;height:25px;background:#fdfdfd;"></div>
<div class="t" style="left:304px;top:421px;width:58px;height:26px;line-height:26px;text-align:center;color:#666;font-size:11px;padding-left:0px;">--:--</div>
<div class="r" style="left:364px;top:422px;width:58px;height:25px;background:#fdfdfd;"></div>
<div class="t" style="left:364px;top:421px;width:58px;height:26px;line-height:26px;text-align:center;color:#666;font-size:11px;padding-left:0px;">--:--</div>
<div class="r" style="left:423px;top:422px;width:46px;height:26px;background:#f5f5f5;"></div>
<svg class="r" style="left:438px;top:426px" width="17" height="14" viewBox="0 0 17 14"><circle cx="5.5" cy="3.75" r="3" fill="#cccccc"/><path d="M0.2 12.7 V9.7 Q0.2 6.9 3 6.9 H7 Q9.8 6.9 9.8 9.7 V12.7 Z" fill="#cccccc"/><path d="M11.2 5.1 H13 V8.2 H15.9 V9.9 H13 V12.7 H11.2 V9.9 H8.3 V8.2 H11.2 Z" fill="#cccccc" stroke="#f5f5f5" stroke-width="1.2" paint-order="stroke"/></svg>
<div class="r" style="left:470px;top:422px;width:102px;height:26px;background:#f5f5f5;"></div>
<div class="r" style="left:575px;top:422px;width:69px;height:26px;background:#f0fff0;"></div>
<div class="t" style="left:575px;top:421px;width:69px;height:26px;line-height:26px;text-align:center;color:#333333;font-size:11px;padding-left:0px;">--:--</div>
<div class="r" style="left:645px;top:422px;width:59px;height:26px;background:#f0fff0;"></div>
<div class="t" style="left:645px;top:421px;width:59px;height:26px;line-height:26px;text-align:center;color:#333333;font-size:11px;padding-left:0px;">--:--</div>
<div class="r" style="left:705px;top:422px;width:59px;height:26px;background:#f0fff0;"></div>
<div class="t" style="left:705px;top:421px;width:59px;height:26px;line-height:26px;text-align:center;color:#333333;font-size:11px;padding-left:0px;">--:--</div>
<div class="r" style="left:765px;top:422px;width:64px;height:26px;background:#f5f5dc;"></div>
<div class="t" style="left:765px;top:421px;width:64px;height:26px;line-height:26px;text-align:center;color:#333333;font-size:11px;padding-left:0px;">--:--</div>
<div class="r" style="left:830px;top:422px;width:59px;height:26px;background:#f5f5dc;"></div>
<div class="t" style="left:830px;top:421px;width:59px;height:26px;line-height:26px;text-align:center;color:#333333;font-size:11px;padding-left:0px;">--:--</div>
<div class="r" style="left:890px;top:422px;width:59px;height:26px;background:#f5f5dc;"></div>
<div class="t" style="left:890px;top:421px;width:59px;height:26px;line-height:26px;text-align:center;color:#333333;font-size:11px;padding-left:0px;">--:--</div>
<div class="r" style="left:950px;top:422px;width:84px;height:26px;background:#f0fff0;"></div>
<div class="t" style="left:950px;top:421px;width:84px;height:26px;line-height:26px;text-align:center;color:#333333;font-size:11px;padding-left:0px;">--:--</div>
<div class="r" style="left:1035px;top:422px;width:59px;height:26px;background:#f0fff0;"></div>
<div class="t" style="left:1035px;top:421px;width:59px;height:26px;line-height:26px;text-align:center;color:#333333;font-size:11px;padding-left:0px;">--:--</div>
<div class="r" style="left:1095px;top:422px;width:59px;height:26px;background:#f0fff0;"></div>
<div class="t" style="left:1095px;top:421px;width:59px;height:26px;line-height:26px;text-align:center;color:#333333;font-size:11px;padding-left:0px;">--:--</div>
<div class="r" style="left:1155px;top:422px;width:146px;height:26px;background:#f5f5f5;"></div>
<svg class="r" style="left:1288px;top:431px" width="8" height="8" viewBox="0 0 8 8"><rect x="0" y="3" width="8" height="2" fill="#000"/><rect x="3" y="0" width="2" height="8" fill="#000"/></svg>
<div class="r" style="left:70px;top:449px;width:92px;height:27px;background:#f5f5f5;"></div>
<div class="t" style="left:70px;top:449px;width:92px;height:27px;line-height:27px;text-align:left;color:#337ab7;font-size:11px;padding-left:3px;">10/01/2026 Sáb.</div>
<div class="r" style="left:163px;top:449px;width:19px;height:27px;background:#fdfdfd;"></div>
<svg class="r" style="left:169px;top:455px" width="8" height="13" viewBox="0 0 8 13"><circle cx="4" cy="2.1" r="1.5" fill="#111"/><path d="M1.4 5.2 H5.3 V10.3 H6.9 V11.7 H1.1 V10.3 H2.6 V6.5 H1.4 Z" fill="#111"/></svg>
<div class="r" style="left:184px;top:449px;width:58px;height:26px;background:#ccffcc;"></div>
<div class="t" style="left:184px;top:449px;width:58px;height:27px;line-height:27px;text-align:center;color:#333333;font-size:11px;padding-left:0px;">16:52</div>
<div class="r" style="left:244px;top:449px;width:58px;height:26px;background:#ccffcc;"></div>
<div class="t" style="left:244px;top:449px;width:58px;height:27px;line-height:27px;text-align:center;color:#333333;font-size:11px;padding-left:0px;">20:59</div>
<div class="r" style="left:304px;top:449px;width:58px;height:26px;background:#ccffcc;"></div>
<div class="t" style="left:304px;top:449px;width:58px;height:27px;line-height:27px;text-align:center;color:#333333;font-size:11px;padding-left:0px;">21:16</div>
<div class="r" style="left:364px;top:449px;width:58px;height:26px;background:#ccffcc;"></div>
<div class="t" style="left:364px;top:449px;width:58px;height:27px;line-height:27px;text-align:center;color:#333333;font-size:11px;padding-left:0px;">05:13</div>
<svg class="r" style="left:410px;top:455px" width="11" height="14" viewBox="0 0 11 14"><path d="M2 1 H8.3 V2.1 Q7.3 2.5 7.5 5 Q7.6 6.2 9.6 6.8 V8.7 H1 V6.8 Q3 6.2 3.1 5 Q3.3 2.5 2 2.1 Z" fill="#2e8dd2"/><rect x="4.9" y="8.6" width="1.3" height="3.9" fill="#2e8dd2"/><rect x="4" y="2.3" width="0.9" height="3" fill="#a8d6f2"/></svg>
<div class="r" style="left:423px;top:449px;width:46px;height:27px;background:#f5f5f5;"></div>
<svg class="r" style="left:438px;top:454px" width="17" height="14" viewBox="0 0 17 14"><circle cx="5.5" cy="3.75" r="3" fill="#2b2b2b"/><path d="M0.2 12.7 V9.7 Q0.2 6.9 3 6.9 H7 Q9.8 6.9 9.8 9.7 V12.7 Z" fill="#2b2b2b"/><path d="M11.2 5.1 H13 V8.2 H15.9 V9.9 H13 V12.7 H11.2 V9.9 H8.3 V8.2 H11.2 Z" fill="#2b2b2b" stroke="#f5f5f5" stroke-width="1.2" paint-order="stroke"/></svg>
<div class="r" style="left:470px;top:449px;width:102px;height:27px;background:#f5f5f5;"></div>
<div class="r" style="left:575px;top:449px;width:69px;height:27px;background:#f0fff0;"></div>
<div class="t" style="left:575px;top:449px;width:69px;height:27px;line-height:27px;text-align:center;color:#333333;font-size:11px;padding-left:0px;">13:00</div>
<div class="r" style="left:645px;top:449px;width:59px;height:27px;background:#f0fff0;"></div>
<div class="t" style="left:645px;top:449px;width:59px;height:27px;line-height:27px;text-align:center;color:#333333;font-size:11px;padding-left:0px;">5:00</div>
<div class="r" style="left:705px;top:449px;width:59px;height:27px;background:#f0fff0;"></div>
<div class="t" style="left:705px;top:449px;width:59px;height:27px;line-height:27px;text-align:center;color:#333333;font-size:11px;padding-left:0px;">8:00</div>
<div class="r" style="left:765px;top:449px;width:64px;height:27px;background:#f5f5dc;"></div>
<div class="t" style="left:765px;top:449px;width:64px;height:27px;line-height:27px;text-align:center;color:#333333;font-size:11px;padding-left:0px;">0:04</div>
<div class="r" style="left:830px;top:449px;width:59px;height:27px;background:#f5f5dc;"></div>
<div class="t" style="left:830px;top:449px;width:59px;height:27px;line-height:27px;text-align:center;color:#333333;font-size:11px;padding-left:0px;">0:04</div>
<div class="r" style="left:890px;top:449px;width:59px;height:27px;background:#f5f5dc;"></div>
<div class="t" style="left:890px;top:449px;width:59px;height:27px;line-height:27px;text-align:center;color:#333333;font-size:11px;padding-left:0px;">--:--</div>
<div class="r" style="left:950px;top:449px;width:84px;height:27px;background:#f0fff0;"></div>
<div class="t" style="left:950px;top:449px;width:84px;height:27px;line-height:27px;text-align:center;color:#333333;font-size:11px;padding-left:0px;">--:--</div>
<div class="r" style="left:1035px;top:449px;width:59px;height:27px;background:#f0fff0;"></div>
<div class="t" style="left:1035px;top:449px;width:59px;height:27px;line-height:27px;text-align:center;color:#333333;font-size:11px;padding-left:0px;">--:--</div>
<div class="r" style="left:1095px;top:449px;width:59px;height:27px;background:#f0fff0;"></div>
<div class="t" style="left:1095px;top:449px;width:59px;height:27px;line-height:27px;text-align:center;color:#333333;font-size:11px;padding-left:0px;">--:--</div>
<div class="r" style="left:1155px;top:449px;width:146px;height:27px;background:#f5f5f5;"></div>
<svg class="r" style="left:1161px;top:456px" width="4" height="11" viewBox="0 0 4 11"><rect x="0" y="0" width="3.2" height="8" fill="#f3a21c"/><rect x="0" y="8.7" width="3.2" height="2.3" fill="#f3a21c"/></svg>
<div class="t" style="left:1170px;top:449px;width:116px;height:27px;line-height:27px;text-align:left;color:#333333;font-size:11px;padding-left:0px;">Saída antecipada</div>
<svg class="r" style="left:1288px;top:458px" width="8" height="8" viewBox="0 0 8 8"><rect x="0" y="3" width="8" height="2" fill="#000"/><rect x="3" y="0" width="2" height="8" fill="#000"/></svg>
<div class="r" style="left:70px;top:477px;width:92px;height:27px;background:#f5f5f5;"></div>
<div class="t" style="left:70px;top:477px;width:92px;height:27px;line-height:27px;text-align:left;color:#333333;font-size:11px;padding-left:3px;">11/01/2026 Dom.</div>
<div class="r" style="left:163px;top:477px;width:19px;height:27px;background:#fdfdfd;"></div>
<svg class="r" style="left:169px;top:483px" width="8" height="13" viewBox="0 0 8 13"><circle cx="4" cy="2.1" r="1.5" fill="#111"/><path d="M1.4 5.2 H5.3 V10.3 H6.9 V11.7 H1.1 V10.3 H2.6 V6.5 H1.4 Z" fill="#111"/></svg>
<div class="r" style="left:184px;top:477px;width:58px;height:26px;background:#fdfdfd;"></div>
<div class="t" style="left:184px;top:477px;width:58px;height:27px;line-height:27px;text-align:center;color:#666;font-size:11px;padding-left:0px;">--:--</div>
<div class="r" style="left:244px;top:477px;width:58px;height:26px;background:#fdfdfd;"></div>
<div class="t" style="left:244px;top:477px;width:58px;height:27px;line-height:27px;text-align:center;color:#666;font-size:11px;padding-left:0px;">--:--</div>
<div class="r" style="left:304px;top:477px;width:58px;height:26px;background:#fdfdfd;"></div>
<div class="t" style="left:304px;top:477px;width:58px;height:27px;line-height:27px;text-align:center;color:#666;font-size:11px;padding-left:0px;">--:--</div>
<div class="r" style="left:364px;top:477px;width:58px;height:26px;background:#fdfdfd;"></div>
<div class="t" style="left:364px;top:477px;width:58px;height:27px;line-height:27px;text-align:center;color:#666;font-size:11px;padding-left:0px;">--:--</div>
<div class="r" style="left:423px;top:477px;width:46px;height:27px;background:#f5f5f5;"></div>
<svg class="r" style="left:438px;top:482px" width="17" height="14" viewBox="0 0 17 14"><circle cx="5.5" cy="3.75" r="3" fill="#cccccc"/><path d="M0.2 12.7 V9.7 Q0.2 6.9 3 6.9 H7 Q9.8 6.9 9.8 9.7 V12.7 Z" fill="#cccccc"/><path d="M11.2 5.1 H13 V8.2 H15.9 V9.9 H13 V12.7 H11.2 V9.9 H8.3 V8.2 H11.2 Z" fill="#cccccc" stroke="#f5f5f5" stroke-width="1.2" paint-order="stroke"/></svg>
<div class="r" style="left:470px;top:477px;width:102px;height:27px;background:#f5f5f5;"></div>
<div class="r" style="left:575px;top:477px;width:69px;height:27px;background:#f0fff0;"></div>
<div class="t" style="left:575px;top:477px;width:69px;height:27px;line-height:27px;text-align:center;color:#333333;font-size:11px;padding-left:0px;">--:--</div>
<div class="r" style="left:645px;top:477px;width:59px;height:27px;background:#f0fff0;"></div>
<div class="t" style="left:645px;top:477px;width:59px;height:27px;line-height:27px;text-align:center;color:#333333;font-size:11px;padding-left:0px;">--:--</div>
<div class="r" style="left:705px;top:477px;width:59px;height:27px;background:#f0fff0;"></div>
<div class="t" style="left:705px;top:477px;width:59px;height:27px;line-height:27px;text-align:center;color:#333333;font-size:11px;padding-left:0px;">--:--</div>
<div class="r" style="left:765px;top:477px;width:64px;height:27px;background:#f5f5dc;"></div>
<div class="t" style="left:765px;top:477px;width:64px;height:27px;line-height:27px;text-align:center;color:#333333;font-size:11px;padding-left:0px;">--:--</div>
<div class="r" style="left:830px;top:477px;width:59px;height:27px;background:#f5f5dc;"></div>
<div class="t" style="left:830px;top:477px;width:59px;height:27px;line-height:27px;text-align:center;color:#333333;font-size:11px;padding-left:0px;">--:--</div>
<div class="r" style="left:890px;top:477px;width:59px;height:27px;background:#f5f5dc;"></div>
<div class="t" style="left:890px;top:477px;width:59px;height:27px;line-height:27px;text-align:center;color:#333333;font-size:11px;padding-left:0px;">--:--</div>
<div class="r" style="left:950px;top:477px;width:84px;height:27px;background:#f0fff0;"></div>
<div class="t" style="left:950px;top:477px;width:84px;height:27px;line-height:27px;text-align:center;color:#333333;font-size:11px;padding-left:0px;">--:--</div>
<div class="r" style="left:1035px;top:477px;width:59px;height:27px;background:#f0fff0;"></div>
<div class="t" style="left:1035px;top:477px;width:59px;height:27px;line-height:27px;text-align:center;color:#333333;font-size:11px;padding-left:0px;">--:--</div>
<div class="r" style="left:1095px;top:477px;width:59px;height:27px;background:#f0fff0;"></div>
<div class="t" style="left:1095px;top:477px;width:59px;height:27px;line-height:27px;text-align:center;color:#333333;font-size:11px;padding-left:0px;">--:--</div>
<div class="r" style="left:1155px;top:477px;width:146px;height:27px;background:#f5f5f5;"></div>
<svg class="r" style="left:1288px;top:486px" width="8" height="8" viewBox="0 0 8 8"><rect x="0" y="3" width="8" height="2" fill="#000"/><rect x="3" y="0" width="2" height="8" fill="#000"/></svg>
<div class="r" style="left:70px;top:505px;width:92px;height:26px;background:#f5f5f5;"></div>
<div class="t" style="left:70px;top:504px;width:92px;height:26px;line-height:26px;text-align:left;color:#333333;font-size:11px;padding-left:3px;">12/01/2026 Seg.</div>
<div class="r" style="left:163px;top:505px;width:19px;height:26px;background:#fdfdfd;"></div>
<svg class="r" style="left:169px;top:510px" width="8" height="13" viewBox="0 0 8 13"><circle cx="4" cy="2.1" r="1.5" fill="#111"/><path d="M1.4 5.2 H5.3 V10.3 H6.9 V11.7 H1.1 V10.3 H2.6 V6.5 H1.4 Z" fill="#111"/></svg>
<div class="r" style="left:184px;top:505px;width:58px;height:25px;background:#fdfdfd;"></div>
<div class="t" style="left:184px;top:505px;width:58px;height:26px;line-height:26px;text-align:center;color:#666;font-size:11px;padding-left:0px;">--:--</div>
<div class="r" style="left:244px;top:505px;width:58px;height:25px;background:#fdfdfd;"></div>
<div class="t" style="left:244px;top:505px;width:58px;height:26px;line-height:26px;text-align:center;color:#666;font-size:11px;padding-left:0px;">--:--</div>
<div class="r" style="left:304px;top:505px;width:58px;height:25px;background:#fdfdfd;"></div>
<div class="t" style="left:304px;top:505px;width:58px;height:26px;line-height:26px;text-align:center;color:#666;font-size:11px;padding-left:0px;">--:--</div>
<div class="r" style="left:364px;top:505px;width:58px;height:25px;background:#fdfdfd;"></div>
<div class="t" style="left:364px;top:505px;width:58px;height:26px;line-height:26px;text-align:center;color:#666;font-size:11px;padding-left:0px;">--:--</div>
<div class="r" style="left:423px;top:505px;width:46px;height:26px;background:#f5f5f5;"></div>
<svg class="r" style="left:438px;top:509px" width="17" height="14" viewBox="0 0 17 14"><circle cx="5.5" cy="3.75" r="3" fill="#2b2b2b"/><path d="M0.2 12.7 V9.7 Q0.2 6.9 3 6.9 H7 Q9.8 6.9 9.8 9.7 V12.7 Z" fill="#2b2b2b"/><path d="M11.2 5.1 H13 V8.2 H15.9 V9.9 H13 V12.7 H11.2 V9.9 H8.3 V8.2 H11.2 Z" fill="#2b2b2b" stroke="#f5f5f5" stroke-width="1.2" paint-order="stroke"/></svg>
<div class="r" style="left:470px;top:505px;width:102px;height:26px;background:#f5f5f5;"></div>
<div class="r" style="left:575px;top:505px;width:69px;height:26px;background:#f0fff0;"></div>
<div class="t" style="left:575px;top:505px;width:69px;height:26px;line-height:26px;text-align:center;color:#333333;font-size:11px;padding-left:0px;">--:--</div>
<div class="r" style="left:645px;top:505px;width:59px;height:26px;background:#f0fff0;"></div>
<div class="t" style="left:645px;top:505px;width:59px;height:26px;line-height:26px;text-align:center;color:#333333;font-size:11px;padding-left:0px;">--:--</div>
<div class="r" style="left:705px;top:505px;width:59px;height:26px;background:#f0fff0;"></div>
<div class="t" style="left:705px;top:505px;width:59px;height:26px;line-height:26px;text-align:center;color:#333333;font-size:11px;padding-left:0px;">--:--</div>
<div class="r" style="left:765px;top:505px;width:64px;height:26px;background:#f5f5dc;"></div>
<div class="t" style="left:765px;top:505px;width:64px;height:26px;line-height:26px;text-align:center;color:#333333;font-size:11px;padding-left:0px;">--:--</div>
<div class="r" style="left:830px;top:505px;width:59px;height:26px;background:#f5f5dc;"></div>
<div class="t" style="left:830px;top:505px;width:59px;height:26px;line-height:26px;text-align:center;color:#333333;font-size:11px;padding-left:0px;">--:--</div>
<div class="r" style="left:890px;top:505px;width:59px;height:26px;background:#f5f5dc;"></div>
<div class="t" style="left:890px;top:505px;width:59px;height:26px;line-height:26px;text-align:center;color:#333333;font-size:11px;padding-left:0px;">--:--</div>
<div class="r" style="left:950px;top:505px;width:84px;height:26px;background:#f0fff0;"></div>
<div class="t" style="left:950px;top:505px;width:84px;height:26px;line-height:26px;text-align:center;color:#333333;font-size:11px;padding-left:0px;">13:00</div>
<div class="r" style="left:1035px;top:505px;width:59px;height:26px;background:#f0fff0;"></div>
<div class="t" style="left:1035px;top:505px;width:59px;height:26px;line-height:26px;text-align:center;color:#333333;font-size:11px;padding-left:0px;">5:00</div>
<div class="r" style="left:1095px;top:505px;width:59px;height:26px;background:#f0fff0;"></div>
<div class="t" style="left:1095px;top:505px;width:59px;height:26px;line-height:26px;text-align:center;color:#333333;font-size:11px;padding-left:0px;">8:00</div>
<div class="r" style="left:1155px;top:505px;width:146px;height:26px;background:#f5f5f5;"></div>
<div class="t" style="left:1160px;top:504px;width:126px;height:26px;line-height:26px;text-align:left;color:#333333;font-size:11px;padding-left:0px;">Falta</div>
<svg class="r" style="left:1288px;top:514px" width="8" height="8" viewBox="0 0 8 8"><rect x="0" y="3" width="8" height="2" fill="#000"/><rect x="3" y="0" width="2" height="8" fill="#000"/></svg>
<div class="r" style="left:70px;top:532px;width:92px;height:27px;background:#f5f5f5;"></div>
<div class="t" style="left:70px;top:532px;width:92px;height:27px;line-height:27px;text-align:left;color:#333333;font-size:11px;padding-left:3px;">13/01/2026 Ter.</div>
<div class="r" style="left:163px;top:532px;width:19px;height:27px;background:#fdfdfd;"></div>
<svg class="r" style="left:169px;top:538px" width="8" height="13" viewBox="0 0 8 13"><circle cx="4" cy="2.1" r="1.5" fill="#111"/><path d="M1.4 5.2 H5.3 V10.3 H6.9 V11.7 H1.1 V10.3 H2.6 V6.5 H1.4 Z" fill="#111"/></svg>
<div class="r" style="left:184px;top:532px;width:58px;height:26px;background:#fdfdfd;"></div>
<div class="t" style="left:184px;top:532px;width:58px;height:27px;line-height:27px;text-align:center;color:#666;font-size:11px;padding-left:0px;">--:--</div>
<div class="r" style="left:244px;top:532px;width:58px;height:26px;background:#fdfdfd;"></div>
<div class="t" style="left:244px;top:532px;width:58px;height:27px;line-height:27px;text-align:center;color:#666;font-size:11px;padding-left:0px;">--:--</div>
<div class="r" style="left:304px;top:532px;width:58px;height:26px;background:#fdfdfd;"></div>
<div class="t" style="left:304px;top:532px;width:58px;height:27px;line-height:27px;text-align:center;color:#666;font-size:11px;padding-left:0px;">--:--</div>
<div class="r" style="left:364px;top:532px;width:58px;height:26px;background:#fdfdfd;"></div>
<div class="t" style="left:364px;top:532px;width:58px;height:27px;line-height:27px;text-align:center;color:#666;font-size:11px;padding-left:0px;">--:--</div>
<div class="r" style="left:423px;top:532px;width:46px;height:27px;background:#f5f5f5;"></div>
<svg class="r" style="left:438px;top:537px" width="17" height="14" viewBox="0 0 17 14"><circle cx="5.5" cy="3.75" r="3" fill="#cccccc"/><path d="M0.2 12.7 V9.7 Q0.2 6.9 3 6.9 H7 Q9.8 6.9 9.8 9.7 V12.7 Z" fill="#cccccc"/><path d="M11.2 5.1 H13 V8.2 H15.9 V9.9 H13 V12.7 H11.2 V9.9 H8.3 V8.2 H11.2 Z" fill="#cccccc" stroke="#f5f5f5" stroke-width="1.2" paint-order="stroke"/></svg>
<div class="r" style="left:470px;top:532px;width:102px;height:27px;background:#f5f5f5;"></div>
<div class="r" style="left:575px;top:532px;width:69px;height:27px;background:#f0fff0;"></div>
<div class="t" style="left:575px;top:532px;width:69px;height:27px;line-height:27px;text-align:center;color:#333333;font-size:11px;padding-left:0px;">--:--</div>
<div class="r" style="left:645px;top:532px;width:59px;height:27px;background:#f0fff0;"></div>
<div class="t" style="left:645px;top:532px;width:59px;height:27px;line-height:27px;text-align:center;color:#333333;font-size:11px;padding-left:0px;">--:--</div>
<div class="r" style="left:705px;top:532px;width:59px;height:27px;background:#f0fff0;"></div>
<div class="t" style="left:705px;top:532px;width:59px;height:27px;line-height:27px;text-align:center;color:#333333;font-size:11px;padding-left:0px;">--:--</div>
<div class="r" style="left:765px;top:532px;width:64px;height:27px;background:#f5f5dc;"></div>
<div class="t" style="left:765px;top:532px;width:64px;height:27px;line-height:27px;text-align:center;color:#333333;font-size:11px;padding-left:0px;">--:--</div>
<div class="r" style="left:830px;top:532px;width:59px;height:27px;background:#f5f5dc;"></div>
<div class="t" style="left:830px;top:532px;width:59px;height:27px;line-height:27px;text-align:center;color:#333333;font-size:11px;padding-left:0px;">--:--</div>
<div class="r" style="left:890px;top:532px;width:59px;height:27px;background:#f5f5dc;"></div>
<div class="t" style="left:890px;top:532px;width:59px;height:27px;line-height:27px;text-align:center;color:#333333;font-size:11px;padding-left:0px;">--:--</div>
<div class="r" style="left:950px;top:532px;width:84px;height:27px;background:#f0fff0;"></div>
<div class="t" style="left:950px;top:532px;width:84px;height:27px;line-height:27px;text-align:center;color:#333333;font-size:11px;padding-left:0px;">--:--</div>
<div class="r" style="left:1035px;top:532px;width:59px;height:27px;background:#f0fff0;"></div>
<div class="t" style="left:1035px;top:532px;width:59px;height:27px;line-height:27px;text-align:center;color:#333333;font-size:11px;padding-left:0px;">--:--</div>
<div class="r" style="left:1095px;top:532px;width:59px;height:27px;background:#f0fff0;"></div>
<div class="t" style="left:1095px;top:532px;width:59px;height:27px;line-height:27px;text-align:center;color:#333333;font-size:11px;padding-left:0px;">--:--</div>
<div class="r" style="left:1155px;top:532px;width:146px;height:27px;background:#f5f5f5;"></div>
<svg class="r" style="left:1288px;top:542px" width="8" height="8" viewBox="0 0 8 8"><rect x="0" y="3" width="8" height="2" fill="#000"/><rect x="3" y="0" width="2" height="8" fill="#000"/></svg>
<div class="r" style="left:70px;top:560px;width:92px;height:27px;background:#f5f5f5;"></div>
<div class="t" style="left:70px;top:560px;width:92px;height:27px;line-height:27px;text-align:left;color:#333333;font-size:11px;padding-left:3px;">14/01/2026 Qua.</div>
<div class="r" style="left:163px;top:560px;width:19px;height:27px;background:#fdfdfd;"></div>
<svg class="r" style="left:169px;top:566px" width="8" height="13" viewBox="0 0 8 13"><circle cx="4" cy="2.1" r="1.5" fill="#111"/><path d="M1.4 5.2 H5.3 V10.3 H6.9 V11.7 H1.1 V10.3 H2.6 V6.5 H1.4 Z" fill="#111"/></svg>
<div class="r" style="left:184px;top:560px;width:58px;height:26px;background:#fdfdfd;"></div>
<div class="t" style="left:184px;top:560px;width:58px;height:27px;line-height:27px;text-align:center;color:#337ab7;font-size:11px;padding-left:0px;">16:38</div>
<div class="r" style="left:244px;top:560px;width:58px;height:26px;background:#fdfdfd;"></div>
<div class="t" style="left:244px;top:560px;width:58px;height:27px;line-height:27px;text-align:center;color:#337ab7;font-size:11px;padding-left:0px;">16:52</div>
<svg class="r" style="left:290px;top:566px" width="11" height="14" viewBox="0 0 11 14"><path d="M2 1 H8.3 V2.1 Q7.3 2.5 7.5 5 Q7.6 6.2 9.6 6.8 V8.7 H1 V6.8 Q3 6.2 3.1 5 Q3.3 2.5 2 2.1 Z" fill="#2e8dd2"/><rect x="4.9" y="8.6" width="1.3" height="3.9" fill="#2e8dd2"/><rect x="4" y="2.3" width="0.9" height="3" fill="#a8d6f2"/></svg>
<div class="r" style="left:304px;top:560px;width:58px;height:26px;background:#fdfdfd;"></div>
<div class="t" style="left:304px;top:560px;width:58px;height:27px;line-height:27px;text-align:center;color:#666;font-size:11px;padding-left:0px;">--:--</div>
<div class="r" style="left:364px;top:560px;width:58px;height:26px;background:#fdfdfd;"></div>
<div class="t" style="left:364px;top:560px;width:58px;height:27px;line-height:27px;text-align:center;color:#666;font-size:11px;padding-left:0px;">--:--</div>
<div class="r" style="left:423px;top:560px;width:46px;height:27px;background:#f5f5f5;"></div>
<svg class="r" style="left:438px;top:565px" width="17" height="14" viewBox="0 0 17 14"><circle cx="5.5" cy="3.75" r="3" fill="#2b2b2b"/><path d="M0.2 12.7 V9.7 Q0.2 6.9 3 6.9 H7 Q9.8 6.9 9.8 9.7 V12.7 Z" fill="#2b2b2b"/><path d="M11.2 5.1 H13 V8.2 H15.9 V9.9 H13 V12.7 H11.2 V9.9 H8.3 V8.2 H11.2 Z" fill="#2b2b2b" stroke="#f5f5f5" stroke-width="1.2" paint-order="stroke"/></svg>
<div class="r" style="left:470px;top:560px;width:102px;height:27px;background:#f5f5f5;"></div>
<div class="r" style="left:575px;top:560px;width:69px;height:27px;background:#f0fff0;"></div>
<div class="t" style="left:575px;top:560px;width:69px;height:27px;line-height:27px;text-align:center;color:#333333;font-size:11px;padding-left:0px;">13:00</div>
<div class="r" style="left:645px;top:560px;width:59px;height:27px;background:#f0fff0;"></div>
<div class="t" style="left:645px;top:560px;width:59px;height:27px;line-height:27px;text-align:center;color:#333333;font-size:11px;padding-left:0px;">5:00</div>
<div class="r" style="left:705px;top:560px;width:59px;height:27px;background:#f0fff0;"></div>
<div class="t" style="left:705px;top:560px;width:59px;height:27px;line-height:27px;text-align:center;color:#333333;font-size:11px;padding-left:0px;">8:00</div>
<div class="r" style="left:765px;top:560px;width:64px;height:27px;background:#f5f5dc;"></div>
<div class="t" style="left:765px;top:560px;width:64px;height:27px;line-height:27px;text-align:center;color:#333333;font-size:11px;padding-left:0px;">12:14</div>
<div class="r" style="left:830px;top:560px;width:59px;height:27px;background:#f5f5dc;"></div>
<div class="t" style="left:830px;top:560px;width:59px;height:27px;line-height:27px;text-align:center;color:#333333;font-size:11px;padding-left:0px;">12:14</div>
<div class="r" style="left:890px;top:560px;width:59px;height:27px;background:#f5f5dc;"></div>
<div class="t" style="left:890px;top:560px;width:59px;height:27px;line-height:27px;text-align:center;color:#333333;font-size:11px;padding-left:0px;">--:--</div>
<div class="r" style="left:950px;top:560px;width:84px;height:27px;background:#f0fff0;"></div>
<div class="t" style="left:950px;top:560px;width:84px;height:27px;line-height:27px;text-align:center;color:#333333;font-size:11px;padding-left:0px;">--:--</div>
<div class="r" style="left:1035px;top:560px;width:59px;height:27px;background:#f0fff0;"></div>
<div class="t" style="left:1035px;top:560px;width:59px;height:27px;line-height:27px;text-align:center;color:#333333;font-size:11px;padding-left:0px;">--:--</div>
<div class="r" style="left:1095px;top:560px;width:59px;height:27px;background:#f0fff0;"></div>
<div class="t" style="left:1095px;top:560px;width:59px;height:27px;line-height:27px;text-align:center;color:#333333;font-size:11px;padding-left:0px;">--:--</div>
<div class="r" style="left:1155px;top:560px;width:146px;height:27px;background:#f5f5f5;"></div>
<svg class="r" style="left:1161px;top:567px" width="4" height="11" viewBox="0 0 4 11"><rect x="0" y="0" width="3.2" height="8" fill="#f3a21c"/><rect x="0" y="8.7" width="3.2" height="2.3" fill="#f3a21c"/></svg>
<div class="t" style="left:1170px;top:560px;width:116px;height:27px;line-height:27px;text-align:left;color:#333333;font-size:11px;padding-left:0px;">Entrada antecipada</div>
<svg class="r" style="left:1288px;top:570px" width="8" height="8" viewBox="0 0 8 8"><rect x="0" y="3" width="8" height="2" fill="#000"/><rect x="3" y="0" width="2" height="8" fill="#000"/></svg>
<div class="r" style="left:70px;top:588px;width:92px;height:27px;background:#f5f5f5;"></div>
<div class="t" style="left:70px;top:588px;width:92px;height:27px;line-height:27px;text-align:left;color:#337ab7;font-size:11px;padding-left:3px;">15/01/2026 Qui.</div>
<div class="r" style="left:163px;top:588px;width:19px;height:27px;background:#fdfdfd;"></div>
<svg class="r" style="left:169px;top:594px" width="8" height="13" viewBox="0 0 8 13"><circle cx="4" cy="2.1" r="1.5" fill="#111"/><path d="M1.4 5.2 H5.3 V10.3 H6.9 V11.7 H1.1 V10.3 H2.6 V6.5 H1.4 Z" fill="#111"/></svg>
<div class="r" style="left:184px;top:588px;width:58px;height:26px;background:#fdfdfd;"></div>
<div class="t" style="left:184px;top:588px;width:58px;height:27px;line-height:27px;text-align:center;color:#337ab7;font-size:11px;padding-left:0px;">20:20</div>
<div class="r" style="left:244px;top:588px;width:58px;height:26px;background:#fdfdfd;"></div>
<div class="t" style="left:244px;top:588px;width:58px;height:27px;line-height:27px;text-align:center;color:#337ab7;font-size:11px;padding-left:0px;">20:38</div>
<div class="r" style="left:304px;top:588px;width:58px;height:26px;background:#fdfdfd;"></div>
<div class="t" style="left:304px;top:588px;width:58px;height:27px;line-height:27px;text-align:center;color:#666;font-size:11px;padding-left:0px;">--:--</div>
<div class="r" style="left:364px;top:588px;width:58px;height:26px;background:#fdfdfd;"></div>
<div class="t" style="left:364px;top:588px;width:58px;height:27px;line-height:27px;text-align:center;color:#666;font-size:11px;padding-left:0px;">--:--</div>
<div class="r" style="left:423px;top:588px;width:46px;height:27px;background:#f5f5f5;"></div>
<svg class="r" style="left:438px;top:593px" width="17" height="14" viewBox="0 0 17 14"><circle cx="5.5" cy="3.75" r="3" fill="#cccccc"/><path d="M0.2 12.7 V9.7 Q0.2 6.9 3 6.9 H7 Q9.8 6.9 9.8 9.7 V12.7 Z" fill="#cccccc"/><path d="M11.2 5.1 H13 V8.2 H15.9 V9.9 H13 V12.7 H11.2 V9.9 H8.3 V8.2 H11.2 Z" fill="#cccccc" stroke="#f5f5f5" stroke-width="1.2" paint-order="stroke"/></svg>
<div class="r" style="left:470px;top:588px;width:102px;height:27px;background:#f5f5f5;"></div>
<div class="r" style="left:575px;top:588px;width:69px;height:27px;background:#f0fff0;"></div>
<div class="t" style="left:575px;top:588px;width:69px;height:27px;line-height:27px;text-align:center;color:#333333;font-size:11px;padding-left:0px;">--:--</div>
<div class="r" style="left:645px;top:588px;width:59px;height:27px;background:#f0fff0;"></div>
<div class="t" style="left:645px;top:588px;width:59px;height:27px;line-height:27px;text-align:center;color:#333333;font-size:11px;padding-left:0px;">--:--</div>
<div class="r" style="left:705px;top:588px;width:59px;height:27px;background:#f0fff0;"></div>
<div class="t" style="left:705px;top:588px;width:59px;height:27px;line-height:27px;text-align:center;color:#333333;font-size:11px;padding-left:0px;">--:--</div>
<div class="r" style="left:765px;top:588px;width:64px;height:27px;background:#f5f5dc;"></div>
<div class="t" style="left:765px;top:588px;width:64px;height:27px;line-height:27px;text-align:center;color:#333333;font-size:11px;padding-left:0px;">0:18</div>
<div class="r" style="left:830px;top:588px;width:59px;height:27px;background:#f5f5dc;"></div>
<div class="t" style="left:830px;top:588px;width:59px;height:27px;line-height:27px;text-align:center;color:#333333;font-size:11px;padding-left:0px;">0:18</div>
<div class="r" style="left:890px;top:588px;width:59px;height:27px;background:#f5f5dc;"></div>
<div class="t" style="left:890px;top:588px;width:59px;height:27px;line-height:27px;text-align:center;color:#333333;font-size:11px;padding-left:0px;">--:--</div>
<div class="r" style="left:950px;top:588px;width:84px;height:27px;background:#f0fff0;"></div>
<div class="t" style="left:950px;top:588px;width:84px;height:27px;line-height:27px;text-align:center;color:#333333;font-size:11px;padding-left:0px;">--:--</div>
<div class="r" style="left:1035px;top:588px;width:59px;height:27px;background:#f0fff0;"></div>
<div class="t" style="left:1035px;top:588px;width:59px;height:27px;line-height:27px;text-align:center;color:#333333;font-size:11px;padding-left:0px;">--:--</div>
<div class="r" style="left:1095px;top:588px;width:59px;height:27px;background:#f0fff0;"></div>
<div class="t" style="left:1095px;top:588px;width:59px;height:27px;line-height:27px;text-align:center;color:#333333;font-size:11px;padding-left:0px;">--:--</div>
<div class="r" style="left:1155px;top:588px;width:146px;height:27px;background:#f5f5f5;"></div>
<svg class="r" style="left:1288px;top:598px" width="8" height="8" viewBox="0 0 8 8"><rect x="0" y="3" width="8" height="2" fill="#000"/><rect x="3" y="0" width="2" height="8" fill="#000"/></svg>
<div class="r" style="left:70px;top:616px;width:92px;height:26px;background:#f5f5f5;"></div>
<div class="t" style="left:70px;top:615px;width:92px;height:26px;line-height:26px;text-align:left;color:#337ab7;font-size:11px;padding-left:3px;">16/01/2026 Sex.</div>
<div class="r" style="left:163px;top:616px;width:19px;height:26px;background:#fdfdfd;"></div>
<svg class="r" style="left:169px;top:621px" width="8" height="13" viewBox="0 0 8 13"><circle cx="4" cy="2.1" r="1.5" fill="#111"/><path d="M1.4 5.2 H5.3 V10.3 H6.9 V11.7 H1.1 V10.3 H2.6 V6.5 H1.4 Z" fill="#111"/></svg>
<div class="r" style="left:184px;top:616px;width:58px;height:25px;background:#fdfdfd;"></div>
<div class="t" style="left:184px;top:615px;width:58px;height:26px;line-height:26px;text-align:center;color:#337ab7;font-size:11px;padding-left:0px;">05:08</div>
<div class="r" style="left:244px;top:616px;width:58px;height:25px;background:#fdfdfd;"></div>
<div class="t" style="left:244px;top:615px;width:58px;height:26px;line-height:26px;text-align:center;color:#337ab7;font-size:11px;padding-left:0px;">16:48</div>
<div class="r" style="left:304px;top:616px;width:58px;height:25px;background:#fdfdfd;"></div>
<div class="t" style="left:304px;top:615px;width:58px;height:26px;line-height:26px;text-align:center;color:#337ab7;font-size:11px;padding-left:0px;">20:55</div>
<div class="r" style="left:364px;top:616px;width:58px;height:25px;background:#fdfdfd;"></div>
<div class="t" style="left:364px;top:615px;width:58px;height:26px;line-height:26px;text-align:center;color:#337ab7;font-size:11px;padding-left:0px;">21:14</div>
<div class="r" style="left:423px;top:616px;width:46px;height:26px;background:#f5f5f5;"></div>
<svg class="r" style="left:438px;top:620px" width="17" height="14" viewBox="0 0 17 14"><circle cx="5.5" cy="3.75" r="3" fill="#2b2b2b"/><path d="M0.2 12.7 V9.7 Q0.2 6.9 3 6.9 H7 Q9.8 6.9 9.8 9.7 V12.7 Z" fill="#2b2b2b"/><path d="M11.2 5.1 H13 V8.2 H15.9 V9.9 H13 V12.7 H11.2 V9.9 H8.3 V8.2 H11.2 Z" fill="#2b2b2b" stroke="#f5f5f5" stroke-width="1.2" paint-order="stroke"/></svg>
<div class="r" style="left:470px;top:616px;width:102px;height:26px;background:#f5f5f5;"></div>
<div class="r" style="left:575px;top:616px;width:69px;height:26px;background:#f0fff0;"></div>
<div class="t" style="left:575px;top:615px;width:69px;height:26px;line-height:26px;text-align:center;color:#333333;font-size:11px;padding-left:0px;">11:59</div>
<div class="r" style="left:645px;top:616px;width:59px;height:26px;background:#f0fff0;"></div>
<div class="t" style="left:645px;top:615px;width:59px;height:26px;line-height:26px;text-align:center;color:#333333;font-size:11px;padding-left:0px;">11:59</div>
<div class="r" style="left:705px;top:616px;width:59px;height:26px;background:#f0fff0;"></div>
<div class="t" style="left:705px;top:615px;width:59px;height:26px;line-height:26px;text-align:center;color:#333333;font-size:11px;padding-left:0px;">--:--</div>
<div class="r" style="left:765px;top:616px;width:64px;height:26px;background:#f5f5dc;"></div>
<div class="t" style="left:765px;top:615px;width:64px;height:26px;line-height:26px;text-align:center;color:#333333;font-size:11px;padding-left:0px;">--:--</div>
<div class="r" style="left:830px;top:616px;width:59px;height:26px;background:#f5f5dc;"></div>
<div class="t" style="left:830px;top:615px;width:59px;height:26px;line-height:26px;text-align:center;color:#333333;font-size:11px;padding-left:0px;">--:--</div>
<div class="r" style="left:890px;top:616px;width:59px;height:26px;background:#f5f5dc;"></div>
<div class="t" style="left:890px;top:615px;width:59px;height:26px;line-height:26px;text-align:center;color:#333333;font-size:11px;padding-left:0px;">--:--</div>
<div class="r" style="left:950px;top:616px;width:84px;height:26px;background:#f0fff0;"></div>
<div class="t" style="left:950px;top:615px;width:84px;height:26px;line-height:26px;text-align:center;color:#333333;font-size:11px;padding-left:0px;">--:--</div>
<div class="r" style="left:1035px;top:616px;width:59px;height:26px;background:#f0fff0;"></div>
<div class="t" style="left:1035px;top:615px;width:59px;height:26px;line-height:26px;text-align:center;color:#333333;font-size:11px;padding-left:0px;">--:--</div>
<div class="r" style="left:1095px;top:616px;width:59px;height:26px;background:#f0fff0;"></div>
<div class="t" style="left:1095px;top:615px;width:59px;height:26px;line-height:26px;text-align:center;color:#333333;font-size:11px;padding-left:0px;">--:--</div>
<div class="r" style="left:1155px;top:616px;width:146px;height:26px;background:#f5f5f5;"></div>
<svg class="r" style="left:1161px;top:622px" width="4" height="11" viewBox="0 0 4 11"><rect x="0" y="0" width="3.2" height="8" fill="#f3a21c"/><rect x="0" y="8.7" width="3.2" height="2.3" fill="#f3a21c"/></svg>
<div class="t" style="left:1170px;top:615px;width:116px;height:26px;line-height:26px;text-align:left;color:#333333;font-size:11px;padding-left:0px;">Saída antecipada</div>
<svg class="r" style="left:1288px;top:625px" width="8" height="8" viewBox="0 0 8 8"><rect x="0" y="3" width="8" height="2" fill="#000"/><rect x="3" y="0" width="2" height="8" fill="#000"/></svg>
<div class="r" style="left:572px;top:144px;width:1px;height:498px;background:#111111;"></div>
<div class="r" style="left:573px;top:144px;width:1px;height:498px;background:#ffffff;"></div>
<div class="r" style="left:574px;top:143px;width:1px;height:499px;background:#111111;"></div>
</body></html>
